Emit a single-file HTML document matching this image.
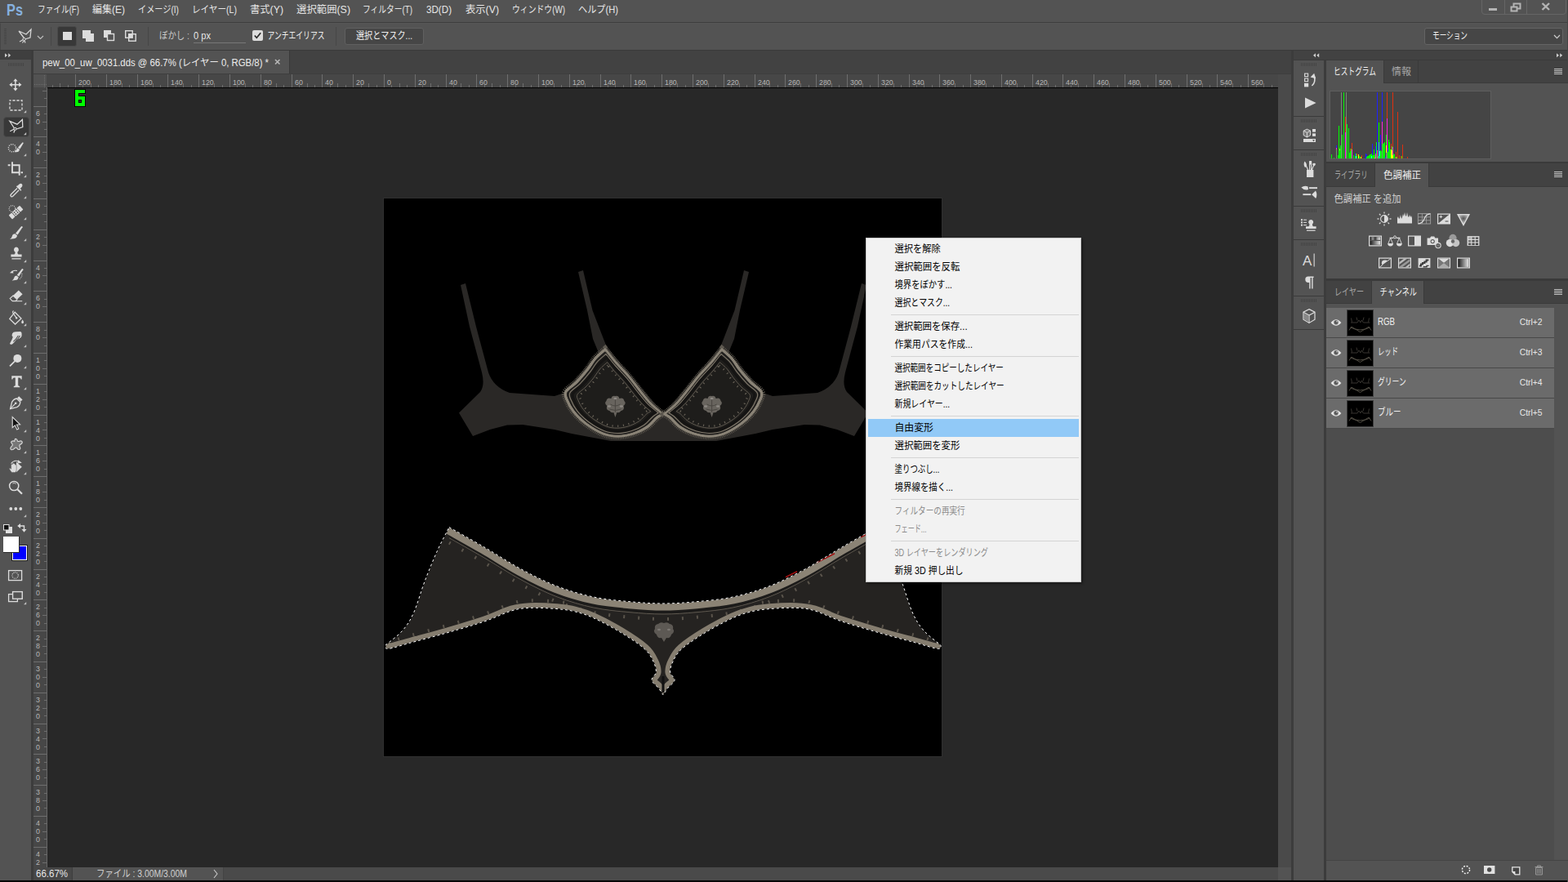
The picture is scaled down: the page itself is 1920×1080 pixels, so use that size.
<!DOCTYPE html>
<html><head><meta charset="utf-8"><title>Photoshop</title>
<style>
html,body{margin:0;padding:0;}
body{width:1920px;height:1080px;overflow:hidden;background:#535353;font-family:"Liberation Sans", "Noto Sans CJK JP", sans-serif;position:relative;}
svg{position:absolute;overflow:visible;}
svg text{font-family:"Liberation Sans", "Noto Sans CJK JP", sans-serif;}
</style></head><body>
<div style="position:absolute;left:0px;top:0px;width:1920px;height:27px;background:#535353;"></div><div style="position:absolute;left:0px;top:27px;width:1920px;height:1px;background:#3d3d3d;"></div><div style="position:absolute;left:0px;top:28px;width:1920px;height:33px;background:#535353;box-sizing:border-box;border-top:1px solid #565656;border-left:1px solid #474747;"></div><div style="position:absolute;left:0px;top:61px;width:1920px;height:1px;background:#3a3a3a;"></div><div style="position:absolute;left:0px;top:62px;width:38px;height:11px;background:#3f3f3f;"></div><div style="position:absolute;left:0px;top:73px;width:38px;height:1005px;background:#535353;"></div><div style="position:absolute;left:38px;top:62px;width:3px;height:1016px;background:#3c3c3c;"></div><div style="position:absolute;left:41px;top:62px;width:1540px;height:28px;background:#424242;"></div><div style="position:absolute;left:41px;top:62px;width:313px;height:28px;background:#535353;"></div><div style="position:absolute;left:354px;top:62px;width:1px;height:28px;background:#3a3a3a;"></div><div style="position:absolute;left:41px;top:90px;width:1540px;height:1px;background:#3e3e3e;"></div><div style="position:absolute;left:41px;top:91px;width:1524px;height:16px;background:#474747;"></div><div style="position:absolute;left:41px;top:107px;width:16px;height:955px;background:#474747;"></div><div style="position:absolute;left:41px;top:91px;width:16px;height:16px;background:#525252;"></div><div style="position:absolute;left:57px;top:107px;width:1px;height:955px;background:#686868;"></div><div style="position:absolute;left:58px;top:108px;width:1507px;height:954px;background:#282828;"></div><div style="position:absolute;left:58px;top:107px;width:1507px;height:1px;background:#000;"></div><div style="position:absolute;left:1565px;top:91px;width:16px;height:971px;background:#4a4a4a;"></div><div style="position:absolute;left:41px;top:1062px;width:1524px;height:16px;background:#4a4a4a;"></div><div style="position:absolute;left:1565px;top:1062px;width:16px;height:16px;background:#535353;"></div><div style="position:absolute;left:41px;top:1062px;width:47px;height:16px;background:#474747;"></div><div style="position:absolute;left:88px;top:1062px;width:1px;height:16px;background:#3e3e3e;"></div><div style="position:absolute;left:89px;top:1062px;width:184px;height:16px;background:#535353;"></div><div style="position:absolute;left:273px;top:1062px;width:1px;height:16px;background:#444;"></div><div style="position:absolute;left:1581px;top:62px;width:3px;height:1016px;background:#3c3c3c;"></div><div style="position:absolute;left:1584px;top:62px;width:336px;height:11px;background:#424242;"></div><div style="position:absolute;left:1584px;top:73px;width:336px;height:1px;background:#3a3a3a;"></div><div style="position:absolute;left:1584px;top:74px;width:37px;height:1004px;background:#535353;"></div><div style="position:absolute;left:1621px;top:74px;width:3px;height:1004px;background:#3c3c3c;"></div><div style="position:absolute;left:0px;top:1078px;width:1920px;height:2px;background:#060606;"></div><div style="position:absolute;left:1919px;top:0px;width:1px;height:1080px;background:#444;"></div><div style="position:absolute;left:1814px;top:-1px;width:102px;height:17px;border:1px solid #666;border-radius:0 0 4px 4px;box-sizing:content-box"></div><div style="position:absolute;left:1842px;top:0px;width:1px;height:17px;background:#666;"></div><div style="position:absolute;left:1869px;top:0px;width:1px;height:17px;background:#666;"></div><div style="position:absolute;left:1823px;top:10px;width:10px;height:3px;background:#b4b4b4;"></div><svg style="left:1849px;top:3px" width="14" height="12"><rect x="4.5" y="1.5" width="8" height="6" fill="none" stroke="#b4b4b4" stroke-width="2"/><rect x="1.5" y="5.5" width="7" height="5" fill="#535353" stroke="#b4b4b4" stroke-width="2"/></svg><svg style="left:1887px;top:3px" width="12" height="10"><path d="M1.5 1 L10 9 M10 1 L1.5 9" stroke="#b4b4b4" stroke-width="2.4"/></svg><div style="position:absolute;left:5px;top:35px;width:3px;height:20px;background:repeating-linear-gradient(#454545 0 1px,transparent 1px 2px)"></div><svg style="left:22px;top:35px" width="18" height="19"><path d="M1 3 L10 7 L16 1 L15 11 L8.5 13 M8.5 13 L1 3" fill="none" stroke="#d6d6d6" stroke-width="1.3" stroke-linejoin="miter"/><path d="M8.8 12.2 L2 16 M7 12.5 L9 17.5 M8.5 13 l-3 4.5" fill="none" stroke="#d6d6d6" stroke-width="1.2"/><circle cx="7.6" cy="13" r="1.6" fill="#535353" stroke="#d6d6d6" stroke-width="1"/></svg><svg style="left:45px;top:43px" width="10" height="6"><path d="M1 1 L4.5 4.5 L8 1" fill="none" stroke="#c0c0c0" stroke-width="1.1"/></svg><div style="position:absolute;left:62px;top:33px;width:1px;height:23px;background:#474747;"></div><div style="position:absolute;left:70px;top:32px;width:24px;height:25px;background:#383838;border:1px solid #4a4a4a;border-radius:3px;box-sizing:border-box"></div><div style="position:absolute;left:77px;top:39px;width:11px;height:10px;background:#dcdcdc;"></div><svg style="left:101px;top:36px" width="15" height="16"><rect x="0" y="1" width="10" height="10" fill="#dcdcdc"/><rect x="4" y="5" width="10" height="10" fill="#dcdcdc"/></svg><svg style="left:127px;top:36px" width="15" height="16"><rect x="0" y="1" width="9" height="9" fill="#dcdcdc"/><rect x="4.5" y="5.5" width="8" height="8" fill="#535353" stroke="#dcdcdc" stroke-width="1.4"/></svg><svg style="left:152px;top:36px" width="16" height="16"><rect x="1.7" y="1.7" width="8.5" height="8.5" fill="none" stroke="#dcdcdc" stroke-width="1.4"/><rect x="5.7" y="5.7" width="8.5" height="8.5" fill="none" stroke="#dcdcdc" stroke-width="1.4"/><rect x="5.7" y="5.7" width="4.5" height="4.5" fill="#dcdcdc"/></svg><div style="position:absolute;left:181px;top:33px;width:1px;height:23px;background:#474747;"></div><div style="position:absolute;left:237px;top:52px;width:64px;height:1px;background:#777;"></div><div style="position:absolute;left:309px;top:37px;width:13px;height:13px;background:#dcdcdc;border-radius:2px"></div><svg style="left:309px;top:37px" width="13" height="13"><path d="M2.8 6.5 L5.3 9.3 L10.2 3.2" fill="none" stroke="#2a2a2a" stroke-width="1.7"/></svg><div style="position:absolute;left:411px;top:33px;width:1px;height:23px;background:#474747;"></div><div style="position:absolute;left:422px;top:34px;width:97px;height:21px;background:#464646;border:1px solid #606060;border-radius:3px;box-sizing:border-box"></div><div style="position:absolute;left:1744px;top:34px;width:170px;height:21px;background:#464646;border:1px solid #646464;border-radius:3px;box-sizing:border-box"></div><svg style="left:1902px;top:42px" width="10" height="7"><path d="M1 1 L4.5 4.7 L8 1" fill="none" stroke="#d0d0d0" stroke-width="1.1"/></svg><svg style="left:5px;top:64px" width="10" height="8"><path d="M1 1.2 L4 3.7 L1 6.2Z M5.2 1.2 L8.2 3.7 L5.2 6.2Z" fill="#cfcfcf"/></svg><div style="position:absolute;left:10px;top:77px;width:19px;height:4px;background:repeating-linear-gradient(90deg,#454545 0 1px,transparent 1px 2px)"></div><svg style="left:336px;top:72px" width="8" height="8"><path d="M1 1 L6.5 6.5 M6.5 1 L1 6.5" stroke="#b8b8b8" stroke-width="1.6"/></svg><svg width="1920" height="1080" style="left:0;top:0"><rect x="64" y="104" width="1" height="3" fill="#6e6e6e"/><rect x="73" y="102" width="1" height="5" fill="#6e6e6e"/><rect x="83" y="104" width="1" height="3" fill="#6e6e6e"/><rect x="92" y="91" width="1" height="16" fill="#6e6e6e"/><rect x="101" y="104" width="1" height="3" fill="#6e6e6e"/><rect x="111" y="102" width="1" height="5" fill="#6e6e6e"/><rect x="120" y="104" width="1" height="3" fill="#6e6e6e"/><rect x="130" y="91" width="1" height="16" fill="#6e6e6e"/><rect x="139" y="104" width="1" height="3" fill="#6e6e6e"/><rect x="149" y="102" width="1" height="5" fill="#6e6e6e"/><rect x="158" y="104" width="1" height="3" fill="#6e6e6e"/><rect x="168" y="91" width="1" height="16" fill="#6e6e6e"/><rect x="177" y="104" width="1" height="3" fill="#6e6e6e"/><rect x="187" y="102" width="1" height="5" fill="#6e6e6e"/><rect x="196" y="104" width="1" height="3" fill="#6e6e6e"/><rect x="205" y="91" width="1" height="16" fill="#6e6e6e"/><rect x="215" y="104" width="1" height="3" fill="#6e6e6e"/><rect x="224" y="102" width="1" height="5" fill="#6e6e6e"/><rect x="234" y="104" width="1" height="3" fill="#6e6e6e"/><rect x="243" y="91" width="1" height="16" fill="#6e6e6e"/><rect x="253" y="104" width="1" height="3" fill="#6e6e6e"/><rect x="262" y="102" width="1" height="5" fill="#6e6e6e"/><rect x="272" y="104" width="1" height="3" fill="#6e6e6e"/><rect x="281" y="91" width="1" height="16" fill="#6e6e6e"/><rect x="290" y="104" width="1" height="3" fill="#6e6e6e"/><rect x="300" y="102" width="1" height="5" fill="#6e6e6e"/><rect x="309" y="104" width="1" height="3" fill="#6e6e6e"/><rect x="319" y="91" width="1" height="16" fill="#6e6e6e"/><rect x="328" y="104" width="1" height="3" fill="#6e6e6e"/><rect x="338" y="102" width="1" height="5" fill="#6e6e6e"/><rect x="347" y="104" width="1" height="3" fill="#6e6e6e"/><rect x="357" y="91" width="1" height="16" fill="#6e6e6e"/><rect x="366" y="104" width="1" height="3" fill="#6e6e6e"/><rect x="376" y="102" width="1" height="5" fill="#6e6e6e"/><rect x="385" y="104" width="1" height="3" fill="#6e6e6e"/><rect x="394" y="91" width="1" height="16" fill="#6e6e6e"/><rect x="404" y="104" width="1" height="3" fill="#6e6e6e"/><rect x="413" y="102" width="1" height="5" fill="#6e6e6e"/><rect x="423" y="104" width="1" height="3" fill="#6e6e6e"/><rect x="432" y="91" width="1" height="16" fill="#6e6e6e"/><rect x="442" y="104" width="1" height="3" fill="#6e6e6e"/><rect x="451" y="102" width="1" height="5" fill="#6e6e6e"/><rect x="461" y="104" width="1" height="3" fill="#6e6e6e"/><rect x="470" y="91" width="1" height="16" fill="#6e6e6e"/><rect x="479" y="104" width="1" height="3" fill="#6e6e6e"/><rect x="489" y="102" width="1" height="5" fill="#6e6e6e"/><rect x="498" y="104" width="1" height="3" fill="#6e6e6e"/><rect x="508" y="91" width="1" height="16" fill="#6e6e6e"/><rect x="517" y="104" width="1" height="3" fill="#6e6e6e"/><rect x="527" y="102" width="1" height="5" fill="#6e6e6e"/><rect x="536" y="104" width="1" height="3" fill="#6e6e6e"/><rect x="546" y="91" width="1" height="16" fill="#6e6e6e"/><rect x="555" y="104" width="1" height="3" fill="#6e6e6e"/><rect x="564" y="102" width="1" height="5" fill="#6e6e6e"/><rect x="574" y="104" width="1" height="3" fill="#6e6e6e"/><rect x="583" y="91" width="1" height="16" fill="#6e6e6e"/><rect x="593" y="104" width="1" height="3" fill="#6e6e6e"/><rect x="602" y="102" width="1" height="5" fill="#6e6e6e"/><rect x="612" y="104" width="1" height="3" fill="#6e6e6e"/><rect x="621" y="91" width="1" height="16" fill="#6e6e6e"/><rect x="631" y="104" width="1" height="3" fill="#6e6e6e"/><rect x="640" y="102" width="1" height="5" fill="#6e6e6e"/><rect x="650" y="104" width="1" height="3" fill="#6e6e6e"/><rect x="659" y="91" width="1" height="16" fill="#6e6e6e"/><rect x="668" y="104" width="1" height="3" fill="#6e6e6e"/><rect x="678" y="102" width="1" height="5" fill="#6e6e6e"/><rect x="687" y="104" width="1" height="3" fill="#6e6e6e"/><rect x="697" y="91" width="1" height="16" fill="#6e6e6e"/><rect x="706" y="104" width="1" height="3" fill="#6e6e6e"/><rect x="716" y="102" width="1" height="5" fill="#6e6e6e"/><rect x="725" y="104" width="1" height="3" fill="#6e6e6e"/><rect x="735" y="91" width="1" height="16" fill="#6e6e6e"/><rect x="744" y="104" width="1" height="3" fill="#6e6e6e"/><rect x="753" y="102" width="1" height="5" fill="#6e6e6e"/><rect x="763" y="104" width="1" height="3" fill="#6e6e6e"/><rect x="772" y="91" width="1" height="16" fill="#6e6e6e"/><rect x="782" y="104" width="1" height="3" fill="#6e6e6e"/><rect x="791" y="102" width="1" height="5" fill="#6e6e6e"/><rect x="801" y="104" width="1" height="3" fill="#6e6e6e"/><rect x="810" y="91" width="1" height="16" fill="#6e6e6e"/><rect x="820" y="104" width="1" height="3" fill="#6e6e6e"/><rect x="829" y="102" width="1" height="5" fill="#6e6e6e"/><rect x="839" y="104" width="1" height="3" fill="#6e6e6e"/><rect x="848" y="91" width="1" height="16" fill="#6e6e6e"/><rect x="857" y="104" width="1" height="3" fill="#6e6e6e"/><rect x="867" y="102" width="1" height="5" fill="#6e6e6e"/><rect x="876" y="104" width="1" height="3" fill="#6e6e6e"/><rect x="886" y="91" width="1" height="16" fill="#6e6e6e"/><rect x="895" y="104" width="1" height="3" fill="#6e6e6e"/><rect x="905" y="102" width="1" height="5" fill="#6e6e6e"/><rect x="914" y="104" width="1" height="3" fill="#6e6e6e"/><rect x="924" y="91" width="1" height="16" fill="#6e6e6e"/><rect x="933" y="104" width="1" height="3" fill="#6e6e6e"/><rect x="942" y="102" width="1" height="5" fill="#6e6e6e"/><rect x="952" y="104" width="1" height="3" fill="#6e6e6e"/><rect x="961" y="91" width="1" height="16" fill="#6e6e6e"/><rect x="971" y="104" width="1" height="3" fill="#6e6e6e"/><rect x="980" y="102" width="1" height="5" fill="#6e6e6e"/><rect x="990" y="104" width="1" height="3" fill="#6e6e6e"/><rect x="999" y="91" width="1" height="16" fill="#6e6e6e"/><rect x="1009" y="104" width="1" height="3" fill="#6e6e6e"/><rect x="1018" y="102" width="1" height="5" fill="#6e6e6e"/><rect x="1027" y="104" width="1" height="3" fill="#6e6e6e"/><rect x="1037" y="91" width="1" height="16" fill="#6e6e6e"/><rect x="1046" y="104" width="1" height="3" fill="#6e6e6e"/><rect x="1056" y="102" width="1" height="5" fill="#6e6e6e"/><rect x="1065" y="104" width="1" height="3" fill="#6e6e6e"/><rect x="1075" y="91" width="1" height="16" fill="#6e6e6e"/><rect x="1084" y="104" width="1" height="3" fill="#6e6e6e"/><rect x="1094" y="102" width="1" height="5" fill="#6e6e6e"/><rect x="1103" y="104" width="1" height="3" fill="#6e6e6e"/><rect x="1113" y="91" width="1" height="16" fill="#6e6e6e"/><rect x="1122" y="104" width="1" height="3" fill="#6e6e6e"/><rect x="1131" y="102" width="1" height="5" fill="#6e6e6e"/><rect x="1141" y="104" width="1" height="3" fill="#6e6e6e"/><rect x="1150" y="91" width="1" height="16" fill="#6e6e6e"/><rect x="1160" y="104" width="1" height="3" fill="#6e6e6e"/><rect x="1169" y="102" width="1" height="5" fill="#6e6e6e"/><rect x="1179" y="104" width="1" height="3" fill="#6e6e6e"/><rect x="1188" y="91" width="1" height="16" fill="#6e6e6e"/><rect x="1198" y="104" width="1" height="3" fill="#6e6e6e"/><rect x="1207" y="102" width="1" height="5" fill="#6e6e6e"/><rect x="1216" y="104" width="1" height="3" fill="#6e6e6e"/><rect x="1226" y="91" width="1" height="16" fill="#6e6e6e"/><rect x="1235" y="104" width="1" height="3" fill="#6e6e6e"/><rect x="1245" y="102" width="1" height="5" fill="#6e6e6e"/><rect x="1254" y="104" width="1" height="3" fill="#6e6e6e"/><rect x="1264" y="91" width="1" height="16" fill="#6e6e6e"/><rect x="1273" y="104" width="1" height="3" fill="#6e6e6e"/><rect x="1283" y="102" width="1" height="5" fill="#6e6e6e"/><rect x="1292" y="104" width="1" height="3" fill="#6e6e6e"/><rect x="1301" y="91" width="1" height="16" fill="#6e6e6e"/><rect x="1311" y="104" width="1" height="3" fill="#6e6e6e"/><rect x="1320" y="102" width="1" height="5" fill="#6e6e6e"/><rect x="1330" y="104" width="1" height="3" fill="#6e6e6e"/><rect x="1339" y="91" width="1" height="16" fill="#6e6e6e"/><rect x="1349" y="104" width="1" height="3" fill="#6e6e6e"/><rect x="1358" y="102" width="1" height="5" fill="#6e6e6e"/><rect x="1368" y="104" width="1" height="3" fill="#6e6e6e"/><rect x="1377" y="91" width="1" height="16" fill="#6e6e6e"/><rect x="1387" y="104" width="1" height="3" fill="#6e6e6e"/><rect x="1396" y="102" width="1" height="5" fill="#6e6e6e"/><rect x="1405" y="104" width="1" height="3" fill="#6e6e6e"/><rect x="1415" y="91" width="1" height="16" fill="#6e6e6e"/><rect x="1424" y="104" width="1" height="3" fill="#6e6e6e"/><rect x="1434" y="102" width="1" height="5" fill="#6e6e6e"/><rect x="1443" y="104" width="1" height="3" fill="#6e6e6e"/><rect x="1453" y="91" width="1" height="16" fill="#6e6e6e"/><rect x="1462" y="104" width="1" height="3" fill="#6e6e6e"/><rect x="1472" y="102" width="1" height="5" fill="#6e6e6e"/><rect x="1481" y="104" width="1" height="3" fill="#6e6e6e"/><rect x="1490" y="91" width="1" height="16" fill="#6e6e6e"/><rect x="1500" y="104" width="1" height="3" fill="#6e6e6e"/><rect x="1509" y="102" width="1" height="5" fill="#6e6e6e"/><rect x="1519" y="104" width="1" height="3" fill="#6e6e6e"/><rect x="1528" y="91" width="1" height="16" fill="#6e6e6e"/><rect x="1538" y="104" width="1" height="3" fill="#6e6e6e"/><rect x="1547" y="102" width="1" height="5" fill="#6e6e6e"/><rect x="1557" y="104" width="1" height="3" fill="#6e6e6e"/><rect x="52" y="111" width="5" height="1" fill="#6e6e6e"/><rect x="54" y="120" width="3" height="1" fill="#6e6e6e"/><rect x="41" y="130" width="16" height="1" fill="#6e6e6e"/><rect x="54" y="139" width="3" height="1" fill="#6e6e6e"/><rect x="52" y="149" width="5" height="1" fill="#6e6e6e"/><rect x="54" y="158" width="3" height="1" fill="#6e6e6e"/><rect x="41" y="167" width="16" height="1" fill="#6e6e6e"/><rect x="54" y="177" width="3" height="1" fill="#6e6e6e"/><rect x="52" y="186" width="5" height="1" fill="#6e6e6e"/><rect x="54" y="196" width="3" height="1" fill="#6e6e6e"/><rect x="41" y="205" width="16" height="1" fill="#6e6e6e"/><rect x="54" y="215" width="3" height="1" fill="#6e6e6e"/><rect x="52" y="224" width="5" height="1" fill="#6e6e6e"/><rect x="54" y="234" width="3" height="1" fill="#6e6e6e"/><rect x="41" y="243" width="16" height="1" fill="#6e6e6e"/><rect x="54" y="252" width="3" height="1" fill="#6e6e6e"/><rect x="52" y="262" width="5" height="1" fill="#6e6e6e"/><rect x="54" y="271" width="3" height="1" fill="#6e6e6e"/><rect x="41" y="281" width="16" height="1" fill="#6e6e6e"/><rect x="54" y="290" width="3" height="1" fill="#6e6e6e"/><rect x="52" y="300" width="5" height="1" fill="#6e6e6e"/><rect x="54" y="309" width="3" height="1" fill="#6e6e6e"/><rect x="41" y="319" width="16" height="1" fill="#6e6e6e"/><rect x="54" y="328" width="3" height="1" fill="#6e6e6e"/><rect x="52" y="337" width="5" height="1" fill="#6e6e6e"/><rect x="54" y="347" width="3" height="1" fill="#6e6e6e"/><rect x="41" y="356" width="16" height="1" fill="#6e6e6e"/><rect x="54" y="366" width="3" height="1" fill="#6e6e6e"/><rect x="52" y="375" width="5" height="1" fill="#6e6e6e"/><rect x="54" y="385" width="3" height="1" fill="#6e6e6e"/><rect x="41" y="394" width="16" height="1" fill="#6e6e6e"/><rect x="54" y="404" width="3" height="1" fill="#6e6e6e"/><rect x="52" y="413" width="5" height="1" fill="#6e6e6e"/><rect x="54" y="423" width="3" height="1" fill="#6e6e6e"/><rect x="41" y="432" width="16" height="1" fill="#6e6e6e"/><rect x="54" y="441" width="3" height="1" fill="#6e6e6e"/><rect x="52" y="451" width="5" height="1" fill="#6e6e6e"/><rect x="54" y="460" width="3" height="1" fill="#6e6e6e"/><rect x="41" y="470" width="16" height="1" fill="#6e6e6e"/><rect x="54" y="479" width="3" height="1" fill="#6e6e6e"/><rect x="52" y="489" width="5" height="1" fill="#6e6e6e"/><rect x="54" y="498" width="3" height="1" fill="#6e6e6e"/><rect x="41" y="508" width="16" height="1" fill="#6e6e6e"/><rect x="54" y="517" width="3" height="1" fill="#6e6e6e"/><rect x="52" y="526" width="5" height="1" fill="#6e6e6e"/><rect x="54" y="536" width="3" height="1" fill="#6e6e6e"/><rect x="41" y="545" width="16" height="1" fill="#6e6e6e"/><rect x="54" y="555" width="3" height="1" fill="#6e6e6e"/><rect x="52" y="564" width="5" height="1" fill="#6e6e6e"/><rect x="54" y="574" width="3" height="1" fill="#6e6e6e"/><rect x="41" y="583" width="16" height="1" fill="#6e6e6e"/><rect x="54" y="593" width="3" height="1" fill="#6e6e6e"/><rect x="52" y="602" width="5" height="1" fill="#6e6e6e"/><rect x="54" y="612" width="3" height="1" fill="#6e6e6e"/><rect x="41" y="621" width="16" height="1" fill="#6e6e6e"/><rect x="54" y="630" width="3" height="1" fill="#6e6e6e"/><rect x="52" y="640" width="5" height="1" fill="#6e6e6e"/><rect x="54" y="649" width="3" height="1" fill="#6e6e6e"/><rect x="41" y="659" width="16" height="1" fill="#6e6e6e"/><rect x="54" y="668" width="3" height="1" fill="#6e6e6e"/><rect x="52" y="678" width="5" height="1" fill="#6e6e6e"/><rect x="54" y="687" width="3" height="1" fill="#6e6e6e"/><rect x="41" y="697" width="16" height="1" fill="#6e6e6e"/><rect x="54" y="706" width="3" height="1" fill="#6e6e6e"/><rect x="52" y="715" width="5" height="1" fill="#6e6e6e"/><rect x="54" y="725" width="3" height="1" fill="#6e6e6e"/><rect x="41" y="734" width="16" height="1" fill="#6e6e6e"/><rect x="54" y="744" width="3" height="1" fill="#6e6e6e"/><rect x="52" y="753" width="5" height="1" fill="#6e6e6e"/><rect x="54" y="763" width="3" height="1" fill="#6e6e6e"/><rect x="41" y="772" width="16" height="1" fill="#6e6e6e"/><rect x="54" y="782" width="3" height="1" fill="#6e6e6e"/><rect x="52" y="791" width="5" height="1" fill="#6e6e6e"/><rect x="54" y="800" width="3" height="1" fill="#6e6e6e"/><rect x="41" y="810" width="16" height="1" fill="#6e6e6e"/><rect x="54" y="819" width="3" height="1" fill="#6e6e6e"/><rect x="52" y="829" width="5" height="1" fill="#6e6e6e"/><rect x="54" y="838" width="3" height="1" fill="#6e6e6e"/><rect x="41" y="848" width="16" height="1" fill="#6e6e6e"/><rect x="54" y="857" width="3" height="1" fill="#6e6e6e"/><rect x="52" y="867" width="5" height="1" fill="#6e6e6e"/><rect x="54" y="876" width="3" height="1" fill="#6e6e6e"/><rect x="41" y="886" width="16" height="1" fill="#6e6e6e"/><rect x="54" y="895" width="3" height="1" fill="#6e6e6e"/><rect x="52" y="904" width="5" height="1" fill="#6e6e6e"/><rect x="54" y="914" width="3" height="1" fill="#6e6e6e"/><rect x="41" y="923" width="16" height="1" fill="#6e6e6e"/><rect x="54" y="933" width="3" height="1" fill="#6e6e6e"/><rect x="52" y="942" width="5" height="1" fill="#6e6e6e"/><rect x="54" y="952" width="3" height="1" fill="#6e6e6e"/><rect x="41" y="961" width="16" height="1" fill="#6e6e6e"/><rect x="54" y="971" width="3" height="1" fill="#6e6e6e"/><rect x="52" y="980" width="5" height="1" fill="#6e6e6e"/><rect x="54" y="989" width="3" height="1" fill="#6e6e6e"/><rect x="41" y="999" width="16" height="1" fill="#6e6e6e"/><rect x="54" y="1008" width="3" height="1" fill="#6e6e6e"/><rect x="52" y="1018" width="5" height="1" fill="#6e6e6e"/><rect x="54" y="1027" width="3" height="1" fill="#6e6e6e"/><rect x="41" y="1037" width="16" height="1" fill="#6e6e6e"/><rect x="54" y="1046" width="3" height="1" fill="#6e6e6e"/><rect x="52" y="1056" width="5" height="1" fill="#6e6e6e"/></svg><svg style="left:41px;top:91px" width="16" height="16"><path d="M13.5 1 V16 M1 12.5 H16" stroke="#6c6c6c" stroke-width="1" stroke-dasharray="1 1" fill="none"/></svg><svg style="left:260px;top:1064px" width="9" height="12"><path d="M2 1 L6 6 L2 11" fill="none" stroke="#c8c8c8" stroke-width="1.1"/></svg><svg width="1920" height="1080" style="left:0;top:0"><rect x="470" y="243" width="683" height="683" fill="#000"/><rect x="469.5" y="242.5" width="684" height="684" fill="none" stroke="#2f2f2f" stroke-width="1"/><g><path d="M564 349 L570 347 L583 400 L598 456 Q604 474 624 481 L679 485 L691 481 L733 432 L726 415 L719 380 L708 333 L714 331 L725.5 380 L739 415 L743 425 L813 508 L813 540 L748 540 L700 531 L679 526 L640 520 L621 520.5 L600 526 L579 534 L562 505.6 L588 480 Q594 472 590 456 L575 400 Z" fill="#2a2826"/><path d="M741.0 428.0 C739.0 429.8 732.6 434.9 729.0 439.0 C725.4 443.1 723.3 447.7 719.5 452.5 C715.7 457.3 710.4 463.5 706.0 468.0 C701.6 472.5 695.0 476.0 693.0 479.5 C691.0 483.0 692.4 484.9 694.0 489.0 C695.6 493.1 698.5 499.0 702.5 504.0 C706.5 509.0 711.9 514.5 718.0 519.0 C724.1 523.5 732.5 528.5 739.0 531.0 C745.5 533.5 751.0 534.0 757.0 534.0 C763.0 534.0 769.2 532.8 775.0 531.0 C780.8 529.2 787.2 526.2 792.0 523.0 C796.8 519.8 800.8 514.2 804.0 511.5 C807.2 508.8 809.8 507.8 811.0 507.0 L811.0 507.0 C808.8 505.2 802.2 500.2 798.0 496.0 C793.8 491.8 790.8 487.8 786.0 482.0 C781.2 476.2 775.0 467.5 769.5 461.0 C764.0 454.5 757.8 448.5 753.0 443.0 C748.2 437.5 743.0 430.5 741.0 428.0 Z" fill="#1e1d1b" stroke="#5d584f" stroke-width="8.5" stroke-dasharray="0.9 1.1"/><path d="M741.0 428.0 C739.0 429.8 732.6 434.9 729.0 439.0 C725.4 443.1 723.3 447.7 719.5 452.5 C715.7 457.3 710.4 463.5 706.0 468.0 C701.6 472.5 695.0 476.0 693.0 479.5 C691.0 483.0 692.4 484.9 694.0 489.0 C695.6 493.1 698.5 499.0 702.5 504.0 C706.5 509.0 711.9 514.5 718.0 519.0 C724.1 523.5 732.5 528.5 739.0 531.0 C745.5 533.5 751.0 534.0 757.0 534.0 C763.0 534.0 769.2 532.8 775.0 531.0 C780.8 529.2 787.2 526.2 792.0 523.0 C796.8 519.8 800.8 514.2 804.0 511.5 C807.2 508.8 809.8 507.8 811.0 507.0 L811.0 507.0 C808.8 505.2 802.2 500.2 798.0 496.0 C793.8 491.8 790.8 487.8 786.0 482.0 C781.2 476.2 775.0 467.5 769.5 461.0 C764.0 454.5 757.8 448.5 753.0 443.0 C748.2 437.5 743.0 430.5 741.0 428.0 Z" fill="#1e1d1b" stroke="#8a8376" stroke-width="3.4" stroke-linejoin="round"/><path d="M741.0 428.0 C739.0 429.8 732.6 434.9 729.0 439.0 C725.4 443.1 723.3 447.7 719.5 452.5 C715.7 457.3 710.4 463.5 706.0 468.0 C701.6 472.5 695.0 476.0 693.0 479.5 C691.0 483.0 692.4 484.9 694.0 489.0 C695.6 493.1 698.5 499.0 702.5 504.0 C706.5 509.0 711.9 514.5 718.0 519.0 C724.1 523.5 732.5 528.5 739.0 531.0 C745.5 533.5 751.0 534.0 757.0 534.0 C763.0 534.0 769.2 532.8 775.0 531.0 C780.8 529.2 787.2 526.2 792.0 523.0 C796.8 519.8 800.8 514.2 804.0 511.5 C807.2 508.8 809.8 507.8 811.0 507.0 L811.0 507.0 C808.8 505.2 802.2 500.2 798.0 496.0 C793.8 491.8 790.8 487.8 786.0 482.0 C781.2 476.2 775.0 467.5 769.5 461.0 C764.0 454.5 757.8 448.5 753.0 443.0 C748.2 437.5 743.0 430.5 741.0 428.0 Z" fill="none" stroke="#24221f" stroke-width="1" transform="translate(33.84 22.19) scale(0.955)"/><path d="M741.0 428.0 C739.0 429.8 732.6 434.9 729.0 439.0 C725.4 443.1 723.3 447.7 719.5 452.5 C715.7 457.3 710.4 463.5 706.0 468.0 C701.6 472.5 695.0 476.0 693.0 479.5 C691.0 483.0 692.4 484.9 694.0 489.0 C695.6 493.1 698.5 499.0 702.5 504.0 C706.5 509.0 711.9 514.5 718.0 519.0 C724.1 523.5 732.5 528.5 739.0 531.0 C745.5 533.5 751.0 534.0 757.0 534.0 C763.0 534.0 769.2 532.8 775.0 531.0 C780.8 529.2 787.2 526.2 792.0 523.0 C796.8 519.8 800.8 514.2 804.0 511.5 C807.2 508.8 809.8 507.8 811.0 507.0 L811.0 507.0 C808.8 505.2 802.2 500.2 798.0 496.0 C793.8 491.8 790.8 487.8 786.0 482.0 C781.2 476.2 775.0 467.5 769.5 461.0 C764.0 454.5 757.8 448.5 753.0 443.0 C748.2 437.5 743.0 430.5 741.0 428.0 Z" fill="none" stroke="#81796c" stroke-width="1.3" transform="translate(63.92 41.90) scale(0.915)"/><path d="M741.0 428.0 C739.0 429.8 732.6 434.9 729.0 439.0 C725.4 443.1 723.3 447.7 719.5 452.5 C715.7 457.3 710.4 463.5 706.0 468.0 C701.6 472.5 695.0 476.0 693.0 479.5 C691.0 483.0 692.4 484.9 694.0 489.0 C695.6 493.1 698.5 499.0 702.5 504.0 C706.5 509.0 711.9 514.5 718.0 519.0 C724.1 523.5 732.5 528.5 739.0 531.0 C745.5 533.5 751.0 534.0 757.0 534.0 C763.0 534.0 769.2 532.8 775.0 531.0 C780.8 529.2 787.2 526.2 792.0 523.0 C796.8 519.8 800.8 514.2 804.0 511.5 C807.2 508.8 809.8 507.8 811.0 507.0 L811.0 507.0 C808.8 505.2 802.2 500.2 798.0 496.0 C793.8 491.8 790.8 487.8 786.0 482.0 C781.2 476.2 775.0 467.5 769.5 461.0 C764.0 454.5 757.8 448.5 753.0 443.0 C748.2 437.5 743.0 430.5 741.0 428.0 Z" fill="none" stroke="#151413" stroke-width="3.6" transform="translate(112.80 73.95) scale(0.85)"/><path d="M741.0 428.0 C739.0 429.8 732.6 434.9 729.0 439.0 C725.4 443.1 723.3 447.7 719.5 452.5 C715.7 457.3 710.4 463.5 706.0 468.0 C701.6 472.5 695.0 476.0 693.0 479.5 C691.0 483.0 692.4 484.9 694.0 489.0 C695.6 493.1 698.5 499.0 702.5 504.0 C706.5 509.0 711.9 514.5 718.0 519.0 C724.1 523.5 732.5 528.5 739.0 531.0 C745.5 533.5 751.0 534.0 757.0 534.0 C763.0 534.0 769.2 532.8 775.0 531.0 C780.8 529.2 787.2 526.2 792.0 523.0 C796.8 519.8 800.8 514.2 804.0 511.5 C807.2 508.8 809.8 507.8 811.0 507.0 L811.0 507.0 C808.8 505.2 802.2 500.2 798.0 496.0 C793.8 491.8 790.8 487.8 786.0 482.0 C781.2 476.2 775.0 467.5 769.5 461.0 C764.0 454.5 757.8 448.5 753.0 443.0 C748.2 437.5 743.0 430.5 741.0 428.0 Z" fill="none" stroke="#746d61" stroke-width="1" transform="translate(180.48 118.32) scale(0.76)"/><path d="M741.0 428.0 C739.0 429.8 732.6 434.9 729.0 439.0 C725.4 443.1 723.3 447.7 719.5 452.5 C715.7 457.3 710.4 463.5 706.0 468.0 C701.6 472.5 695.0 476.0 693.0 479.5 C691.0 483.0 692.4 484.9 694.0 489.0 C695.6 493.1 698.5 499.0 702.5 504.0 C706.5 509.0 711.9 514.5 718.0 519.0 C724.1 523.5 732.5 528.5 739.0 531.0 C745.5 533.5 751.0 534.0 757.0 534.0 C763.0 534.0 769.2 532.8 775.0 531.0 C780.8 529.2 787.2 526.2 792.0 523.0 C796.8 519.8 800.8 514.2 804.0 511.5 C807.2 508.8 809.8 507.8 811.0 507.0 L811.0 507.0 C808.8 505.2 802.2 500.2 798.0 496.0 C793.8 491.8 790.8 487.8 786.0 482.0 C781.2 476.2 775.0 467.5 769.5 461.0 C764.0 454.5 757.8 448.5 753.0 443.0 C748.2 437.5 743.0 430.5 741.0 428.0 Z" fill="none" stroke="#6a6459" stroke-width="3.4" stroke-dasharray="1.6 8" transform="translate(225.60 147.90) scale(0.7)"/><g transform="translate(753.4 498)"><path d="M0 -13 q4 -1 5 3 q5 -2 6 3 q3 3 -1 6 q2 5 -3 6 q-2 3 -5 2 l-2 6 l-2 -6 q-3 1 -5 -2 q-5 -1 -3 -6 q-4 -3 -1 -6 q1 -5 6 -3 q1 -4 5 -3z" fill="#68645e"/><path d="M0 -10 v17 M-6 -3 q6 4 12 0 M-7 3 q7 3 14 0" stroke="#4a4742" stroke-width="1" fill="none"/><ellipse cx="-7.5" cy="-0.5" rx="2.2" ry="1.3" fill="#8d8984"/><ellipse cx="7.5" cy="-0.5" rx="2.2" ry="1.3" fill="#8d8984"/><ellipse cx="0" cy="-10" rx="2" ry="1.2" fill="#8d8984"/></g></g><g transform="translate(1625,0) scale(-1,1)"><path d="M564 349 L570 347 L583 400 L598 456 Q604 474 624 481 L679 485 L691 481 L733 432 L726 415 L719 380 L708 333 L714 331 L725.5 380 L739 415 L743 425 L813 508 L813 540 L748 540 L700 531 L679 526 L640 520 L621 520.5 L600 526 L579 534 L562 505.6 L588 480 Q594 472 590 456 L575 400 Z" fill="#2a2826"/><path d="M741.0 428.0 C739.0 429.8 732.6 434.9 729.0 439.0 C725.4 443.1 723.3 447.7 719.5 452.5 C715.7 457.3 710.4 463.5 706.0 468.0 C701.6 472.5 695.0 476.0 693.0 479.5 C691.0 483.0 692.4 484.9 694.0 489.0 C695.6 493.1 698.5 499.0 702.5 504.0 C706.5 509.0 711.9 514.5 718.0 519.0 C724.1 523.5 732.5 528.5 739.0 531.0 C745.5 533.5 751.0 534.0 757.0 534.0 C763.0 534.0 769.2 532.8 775.0 531.0 C780.8 529.2 787.2 526.2 792.0 523.0 C796.8 519.8 800.8 514.2 804.0 511.5 C807.2 508.8 809.8 507.8 811.0 507.0 L811.0 507.0 C808.8 505.2 802.2 500.2 798.0 496.0 C793.8 491.8 790.8 487.8 786.0 482.0 C781.2 476.2 775.0 467.5 769.5 461.0 C764.0 454.5 757.8 448.5 753.0 443.0 C748.2 437.5 743.0 430.5 741.0 428.0 Z" fill="#1e1d1b" stroke="#5d584f" stroke-width="8.5" stroke-dasharray="0.9 1.1"/><path d="M741.0 428.0 C739.0 429.8 732.6 434.9 729.0 439.0 C725.4 443.1 723.3 447.7 719.5 452.5 C715.7 457.3 710.4 463.5 706.0 468.0 C701.6 472.5 695.0 476.0 693.0 479.5 C691.0 483.0 692.4 484.9 694.0 489.0 C695.6 493.1 698.5 499.0 702.5 504.0 C706.5 509.0 711.9 514.5 718.0 519.0 C724.1 523.5 732.5 528.5 739.0 531.0 C745.5 533.5 751.0 534.0 757.0 534.0 C763.0 534.0 769.2 532.8 775.0 531.0 C780.8 529.2 787.2 526.2 792.0 523.0 C796.8 519.8 800.8 514.2 804.0 511.5 C807.2 508.8 809.8 507.8 811.0 507.0 L811.0 507.0 C808.8 505.2 802.2 500.2 798.0 496.0 C793.8 491.8 790.8 487.8 786.0 482.0 C781.2 476.2 775.0 467.5 769.5 461.0 C764.0 454.5 757.8 448.5 753.0 443.0 C748.2 437.5 743.0 430.5 741.0 428.0 Z" fill="#1e1d1b" stroke="#8a8376" stroke-width="3.4" stroke-linejoin="round"/><path d="M741.0 428.0 C739.0 429.8 732.6 434.9 729.0 439.0 C725.4 443.1 723.3 447.7 719.5 452.5 C715.7 457.3 710.4 463.5 706.0 468.0 C701.6 472.5 695.0 476.0 693.0 479.5 C691.0 483.0 692.4 484.9 694.0 489.0 C695.6 493.1 698.5 499.0 702.5 504.0 C706.5 509.0 711.9 514.5 718.0 519.0 C724.1 523.5 732.5 528.5 739.0 531.0 C745.5 533.5 751.0 534.0 757.0 534.0 C763.0 534.0 769.2 532.8 775.0 531.0 C780.8 529.2 787.2 526.2 792.0 523.0 C796.8 519.8 800.8 514.2 804.0 511.5 C807.2 508.8 809.8 507.8 811.0 507.0 L811.0 507.0 C808.8 505.2 802.2 500.2 798.0 496.0 C793.8 491.8 790.8 487.8 786.0 482.0 C781.2 476.2 775.0 467.5 769.5 461.0 C764.0 454.5 757.8 448.5 753.0 443.0 C748.2 437.5 743.0 430.5 741.0 428.0 Z" fill="none" stroke="#24221f" stroke-width="1" transform="translate(33.84 22.19) scale(0.955)"/><path d="M741.0 428.0 C739.0 429.8 732.6 434.9 729.0 439.0 C725.4 443.1 723.3 447.7 719.5 452.5 C715.7 457.3 710.4 463.5 706.0 468.0 C701.6 472.5 695.0 476.0 693.0 479.5 C691.0 483.0 692.4 484.9 694.0 489.0 C695.6 493.1 698.5 499.0 702.5 504.0 C706.5 509.0 711.9 514.5 718.0 519.0 C724.1 523.5 732.5 528.5 739.0 531.0 C745.5 533.5 751.0 534.0 757.0 534.0 C763.0 534.0 769.2 532.8 775.0 531.0 C780.8 529.2 787.2 526.2 792.0 523.0 C796.8 519.8 800.8 514.2 804.0 511.5 C807.2 508.8 809.8 507.8 811.0 507.0 L811.0 507.0 C808.8 505.2 802.2 500.2 798.0 496.0 C793.8 491.8 790.8 487.8 786.0 482.0 C781.2 476.2 775.0 467.5 769.5 461.0 C764.0 454.5 757.8 448.5 753.0 443.0 C748.2 437.5 743.0 430.5 741.0 428.0 Z" fill="none" stroke="#81796c" stroke-width="1.3" transform="translate(63.92 41.90) scale(0.915)"/><path d="M741.0 428.0 C739.0 429.8 732.6 434.9 729.0 439.0 C725.4 443.1 723.3 447.7 719.5 452.5 C715.7 457.3 710.4 463.5 706.0 468.0 C701.6 472.5 695.0 476.0 693.0 479.5 C691.0 483.0 692.4 484.9 694.0 489.0 C695.6 493.1 698.5 499.0 702.5 504.0 C706.5 509.0 711.9 514.5 718.0 519.0 C724.1 523.5 732.5 528.5 739.0 531.0 C745.5 533.5 751.0 534.0 757.0 534.0 C763.0 534.0 769.2 532.8 775.0 531.0 C780.8 529.2 787.2 526.2 792.0 523.0 C796.8 519.8 800.8 514.2 804.0 511.5 C807.2 508.8 809.8 507.8 811.0 507.0 L811.0 507.0 C808.8 505.2 802.2 500.2 798.0 496.0 C793.8 491.8 790.8 487.8 786.0 482.0 C781.2 476.2 775.0 467.5 769.5 461.0 C764.0 454.5 757.8 448.5 753.0 443.0 C748.2 437.5 743.0 430.5 741.0 428.0 Z" fill="none" stroke="#151413" stroke-width="3.6" transform="translate(112.80 73.95) scale(0.85)"/><path d="M741.0 428.0 C739.0 429.8 732.6 434.9 729.0 439.0 C725.4 443.1 723.3 447.7 719.5 452.5 C715.7 457.3 710.4 463.5 706.0 468.0 C701.6 472.5 695.0 476.0 693.0 479.5 C691.0 483.0 692.4 484.9 694.0 489.0 C695.6 493.1 698.5 499.0 702.5 504.0 C706.5 509.0 711.9 514.5 718.0 519.0 C724.1 523.5 732.5 528.5 739.0 531.0 C745.5 533.5 751.0 534.0 757.0 534.0 C763.0 534.0 769.2 532.8 775.0 531.0 C780.8 529.2 787.2 526.2 792.0 523.0 C796.8 519.8 800.8 514.2 804.0 511.5 C807.2 508.8 809.8 507.8 811.0 507.0 L811.0 507.0 C808.8 505.2 802.2 500.2 798.0 496.0 C793.8 491.8 790.8 487.8 786.0 482.0 C781.2 476.2 775.0 467.5 769.5 461.0 C764.0 454.5 757.8 448.5 753.0 443.0 C748.2 437.5 743.0 430.5 741.0 428.0 Z" fill="none" stroke="#746d61" stroke-width="1" transform="translate(180.48 118.32) scale(0.76)"/><path d="M741.0 428.0 C739.0 429.8 732.6 434.9 729.0 439.0 C725.4 443.1 723.3 447.7 719.5 452.5 C715.7 457.3 710.4 463.5 706.0 468.0 C701.6 472.5 695.0 476.0 693.0 479.5 C691.0 483.0 692.4 484.9 694.0 489.0 C695.6 493.1 698.5 499.0 702.5 504.0 C706.5 509.0 711.9 514.5 718.0 519.0 C724.1 523.5 732.5 528.5 739.0 531.0 C745.5 533.5 751.0 534.0 757.0 534.0 C763.0 534.0 769.2 532.8 775.0 531.0 C780.8 529.2 787.2 526.2 792.0 523.0 C796.8 519.8 800.8 514.2 804.0 511.5 C807.2 508.8 809.8 507.8 811.0 507.0 L811.0 507.0 C808.8 505.2 802.2 500.2 798.0 496.0 C793.8 491.8 790.8 487.8 786.0 482.0 C781.2 476.2 775.0 467.5 769.5 461.0 C764.0 454.5 757.8 448.5 753.0 443.0 C748.2 437.5 743.0 430.5 741.0 428.0 Z" fill="none" stroke="#6a6459" stroke-width="3.4" stroke-dasharray="1.6 8" transform="translate(225.60 147.90) scale(0.7)"/><g transform="translate(753.4 498)"><path d="M0 -13 q4 -1 5 3 q5 -2 6 3 q3 3 -1 6 q2 5 -3 6 q-2 3 -5 2 l-2 6 l-2 -6 q-3 1 -5 -2 q-5 -1 -3 -6 q-4 -3 -1 -6 q1 -5 6 -3 q1 -4 5 -3z" fill="#68645e"/><path d="M0 -10 v17 M-6 -3 q6 4 12 0 M-7 3 q7 3 14 0" stroke="#4a4742" stroke-width="1" fill="none"/><ellipse cx="-7.5" cy="-0.5" rx="2.2" ry="1.3" fill="#8d8984"/><ellipse cx="7.5" cy="-0.5" rx="2.2" ry="1.3" fill="#8d8984"/><ellipse cx="0" cy="-10" rx="2" ry="1.2" fill="#8d8984"/></g></g><clipPath id="gclip"><path d="M550.0 645.6 C557.2 649.7 578.4 661.5 593.0 670.0 C607.6 678.5 623.0 688.7 637.8 696.7 C652.6 704.7 667.2 712.1 682.0 717.8 C696.8 723.5 711.9 727.9 726.7 731.0 C741.5 734.1 756.8 735.4 771.0 736.7 C785.2 738.0 798.3 739.0 812.0 739.0 C825.7 739.0 838.8 738.0 853.0 736.7 C867.2 735.4 882.5 734.1 897.3 731.0 C912.1 727.9 927.2 723.5 942.0 717.8 C956.8 712.1 971.4 704.7 986.2 696.7 C1001.0 688.7 1016.4 678.5 1031.0 670.0 C1045.6 661.5 1066.8 649.7 1074.0 645.6 L1074.0 645.6 C1076.4 650.4 1083.5 663.3 1088.5 674.4 C1093.5 685.5 1099.2 699.4 1104.0 712.0 C1108.8 724.6 1112.8 740.0 1117.3 750.0 C1121.8 760.0 1125.2 765.3 1131.0 772.0 C1136.8 778.7 1148.5 787.0 1152.0 790.0 L1152.0 790.0 C1151.4 790.7 1153.8 794.9 1148.5 794.4 C1143.2 793.9 1132.2 790.0 1120.0 786.7 C1107.8 783.4 1089.8 778.7 1075.0 774.4 C1060.2 770.1 1044.0 765.4 1031.0 761.0 C1018.0 756.6 1006.6 750.6 997.3 747.8 C988.0 745.0 984.2 744.8 975.0 744.4 C965.8 744.0 951.2 744.8 942.0 745.6 C932.8 746.4 927.1 747.1 919.6 749.0 C912.1 750.9 906.6 752.5 897.3 756.7 C888.0 760.9 874.4 768.1 864.0 774.4 C853.6 780.7 841.7 788.5 835.0 794.4 C828.3 800.3 826.4 805.2 824.0 810.0 C821.6 814.8 820.4 819.2 820.7 823.0 C821.0 826.8 826.6 829.7 826.0 833.0 C825.4 836.3 819.6 840.0 817.3 843.0 C815.0 846.0 812.9 849.7 812.0 851.0 L812.0 851.0 C811.1 849.7 809.0 846.0 806.7 843.0 C804.4 840.0 798.6 836.3 798.0 833.0 C797.4 829.7 803.0 826.8 803.3 823.0 C803.6 819.2 802.4 814.8 800.0 810.0 C797.6 805.2 795.7 800.3 789.0 794.4 C782.3 788.5 770.4 780.7 760.0 774.4 C749.6 768.1 736.0 760.9 726.7 756.7 C717.4 752.5 711.9 750.9 704.4 749.0 C696.9 747.1 691.2 746.4 682.0 745.6 C672.8 744.8 658.2 744.0 649.0 744.4 C639.8 744.8 636.0 745.0 626.7 747.8 C617.4 750.6 606.0 756.6 593.0 761.0 C580.0 765.4 563.8 770.1 549.0 774.4 C534.2 778.7 516.2 783.4 504.0 786.7 C491.8 790.0 480.8 793.9 475.5 794.4 C470.2 794.9 472.6 790.7 472.0 790.0 L472.0 790.0 C475.5 787.0 487.2 778.7 493.0 772.0 C498.8 765.3 502.2 760.0 506.7 750.0 C511.2 740.0 515.2 724.6 520.0 712.0 C524.8 699.4 530.5 685.5 535.5 674.4 C540.5 663.3 547.6 650.4 550.0 645.6 Z"/></clipPath><path d="M550.0 645.6 C557.2 649.7 578.4 661.5 593.0 670.0 C607.6 678.5 623.0 688.7 637.8 696.7 C652.6 704.7 667.2 712.1 682.0 717.8 C696.8 723.5 711.9 727.9 726.7 731.0 C741.5 734.1 756.8 735.4 771.0 736.7 C785.2 738.0 798.3 739.0 812.0 739.0 C825.7 739.0 838.8 738.0 853.0 736.7 C867.2 735.4 882.5 734.1 897.3 731.0 C912.1 727.9 927.2 723.5 942.0 717.8 C956.8 712.1 971.4 704.7 986.2 696.7 C1001.0 688.7 1016.4 678.5 1031.0 670.0 C1045.6 661.5 1066.8 649.7 1074.0 645.6 L1074.0 645.6 C1076.4 650.4 1083.5 663.3 1088.5 674.4 C1093.5 685.5 1099.2 699.4 1104.0 712.0 C1108.8 724.6 1112.8 740.0 1117.3 750.0 C1121.8 760.0 1125.2 765.3 1131.0 772.0 C1136.8 778.7 1148.5 787.0 1152.0 790.0 L1152.0 790.0 C1151.4 790.7 1153.8 794.9 1148.5 794.4 C1143.2 793.9 1132.2 790.0 1120.0 786.7 C1107.8 783.4 1089.8 778.7 1075.0 774.4 C1060.2 770.1 1044.0 765.4 1031.0 761.0 C1018.0 756.6 1006.6 750.6 997.3 747.8 C988.0 745.0 984.2 744.8 975.0 744.4 C965.8 744.0 951.2 744.8 942.0 745.6 C932.8 746.4 927.1 747.1 919.6 749.0 C912.1 750.9 906.6 752.5 897.3 756.7 C888.0 760.9 874.4 768.1 864.0 774.4 C853.6 780.7 841.7 788.5 835.0 794.4 C828.3 800.3 826.4 805.2 824.0 810.0 C821.6 814.8 820.4 819.2 820.7 823.0 C821.0 826.8 826.6 829.7 826.0 833.0 C825.4 836.3 819.6 840.0 817.3 843.0 C815.0 846.0 812.9 849.7 812.0 851.0 L812.0 851.0 C811.1 849.7 809.0 846.0 806.7 843.0 C804.4 840.0 798.6 836.3 798.0 833.0 C797.4 829.7 803.0 826.8 803.3 823.0 C803.6 819.2 802.4 814.8 800.0 810.0 C797.6 805.2 795.7 800.3 789.0 794.4 C782.3 788.5 770.4 780.7 760.0 774.4 C749.6 768.1 736.0 760.9 726.7 756.7 C717.4 752.5 711.9 750.9 704.4 749.0 C696.9 747.1 691.2 746.4 682.0 745.6 C672.8 744.8 658.2 744.0 649.0 744.4 C639.8 744.8 636.0 745.0 626.7 747.8 C617.4 750.6 606.0 756.6 593.0 761.0 C580.0 765.4 563.8 770.1 549.0 774.4 C534.2 778.7 516.2 783.4 504.0 786.7 C491.8 790.0 480.8 793.9 475.5 794.4 C470.2 794.9 472.6 790.7 472.0 790.0 L472.0 790.0 C475.5 787.0 487.2 778.7 493.0 772.0 C498.8 765.3 502.2 760.0 506.7 750.0 C511.2 740.0 515.2 724.6 520.0 712.0 C524.8 699.4 530.5 685.5 535.5 674.4 C540.5 663.3 547.6 650.4 550.0 645.6 Z" fill="#252321"/><g clip-path="url(#gclip)"><path d="M550.0 658.6 C557.2 662.7 578.4 674.5 593.0 683.0 C607.6 691.5 623.0 701.7 637.8 709.7 C652.6 717.7 667.2 725.1 682.0 730.8 C696.8 736.5 711.9 740.9 726.7 744.0 C741.5 747.1 756.8 748.4 771.0 749.7 C785.2 751.0 798.3 752.0 812.0 752.0 C825.7 752.0 838.8 751.0 853.0 749.7 C867.2 748.4 882.5 747.1 897.3 744.0 C912.1 740.9 927.2 736.5 942.0 730.8 C956.8 725.1 971.4 717.7 986.2 709.7 C1001.0 701.7 1016.4 691.5 1031.0 683.0 C1045.6 674.5 1066.8 662.7 1074.0 658.6" fill="none" stroke="#5e584f" stroke-width="1"/><path d="M550.0 664.6 C557.2 668.7 578.4 680.5 593.0 689.0 C607.6 697.5 623.0 707.7 637.8 715.7 C652.6 723.7 667.2 731.1 682.0 736.8 C696.8 742.5 711.9 746.9 726.7 750.0 C741.5 753.1 756.8 754.4 771.0 755.7 C785.2 757.0 798.3 758.0 812.0 758.0 C825.7 758.0 838.8 757.0 853.0 755.7 C867.2 754.4 882.5 753.1 897.3 750.0 C912.1 746.9 927.2 742.5 942.0 736.8 C956.8 731.1 971.4 723.7 986.2 715.7 C1001.0 707.7 1016.4 697.5 1031.0 689.0 C1045.6 680.5 1066.8 668.7 1074.0 664.6" fill="none" stroke="#5a544b" stroke-width="4" stroke-dasharray="2 16"/><path d="M472.0 790.0 C472.6 790.7 470.2 794.9 475.5 794.4 C480.8 793.9 491.8 790.0 504.0 786.7 C516.2 783.4 534.2 778.7 549.0 774.4 C563.8 770.1 580.0 765.4 593.0 761.0 C606.0 756.6 617.4 750.6 626.7 747.8 C636.0 745.0 639.8 744.8 649.0 744.4 C658.2 744.0 672.8 744.8 682.0 745.6 C691.2 746.4 696.9 747.1 704.4 749.0 C711.9 750.9 717.4 752.5 726.7 756.7 C736.0 760.9 749.6 768.1 760.0 774.4 C770.4 780.7 782.3 788.5 789.0 794.4 C795.7 800.3 797.6 805.2 800.0 810.0 C802.4 814.8 803.6 819.2 803.3 823.0 C803.0 826.8 797.4 829.7 798.0 833.0 C798.6 836.3 804.4 840.0 806.7 843.0 C809.0 846.0 811.1 849.7 812.0 851.0" fill="none" stroke="#857d6f" stroke-width="12.5"/><path d="M1152.0 790.0 C1151.4 790.7 1153.8 794.9 1148.5 794.4 C1143.2 793.9 1132.2 790.0 1120.0 786.7 C1107.8 783.4 1089.8 778.7 1075.0 774.4 C1060.2 770.1 1044.0 765.4 1031.0 761.0 C1018.0 756.6 1006.6 750.6 997.3 747.8 C988.0 745.0 984.2 744.8 975.0 744.4 C965.8 744.0 951.2 744.8 942.0 745.6 C932.8 746.4 927.1 747.1 919.6 749.0 C912.1 750.9 906.6 752.5 897.3 756.7 C888.0 760.9 874.4 768.1 864.0 774.4 C853.6 780.7 841.7 788.5 835.0 794.4 C828.3 800.3 826.4 805.2 824.0 810.0 C821.6 814.8 820.4 819.2 820.7 823.0 C821.0 826.8 826.6 829.7 826.0 833.0 C825.4 836.3 819.6 840.0 817.3 843.0 C815.0 846.0 812.9 849.7 812.0 851.0" fill="none" stroke="#857d6f" stroke-width="12.5"/><path d="M472.0 781.0 C472.6 781.7 470.2 785.9 475.5 785.4 C480.8 784.9 491.8 781.0 504.0 777.7 C516.2 774.4 534.2 769.7 549.0 765.4 C563.8 761.1 580.0 756.4 593.0 752.0 C606.0 747.6 617.4 741.6 626.7 738.8 C636.0 736.0 639.8 735.8 649.0 735.4 C658.2 735.0 672.8 735.8 682.0 736.6 C691.2 737.4 700.7 739.4 704.4 740.0" fill="none" stroke="#5a544b" stroke-width="4" stroke-dasharray="2 17"/><path d="M1152.0 781.0 C1151.4 781.7 1153.8 785.9 1148.5 785.4 C1143.2 784.9 1132.2 781.0 1120.0 777.7 C1107.8 774.4 1089.8 769.7 1075.0 765.4 C1060.2 761.1 1044.0 756.4 1031.0 752.0 C1018.0 747.6 1006.6 741.6 997.3 738.8 C988.0 736.0 984.2 735.8 975.0 735.4 C965.8 735.0 951.2 735.8 942.0 736.6 C932.8 737.4 923.3 739.4 919.6 740.0" fill="none" stroke="#5a544b" stroke-width="4" stroke-dasharray="2 17"/><path d="M550.0 656.1 C557.2 660.2 578.4 672.0 593.0 680.5 C607.6 689.0 623.0 699.2 637.8 707.2 C652.6 715.2 667.2 722.6 682.0 728.3 C696.8 734.0 711.9 738.4 726.7 741.5 C741.5 744.6 756.8 745.9 771.0 747.2 C785.2 748.5 798.3 749.5 812.0 749.5 C825.7 749.5 838.8 748.5 853.0 747.2 C867.2 745.9 882.5 744.6 897.3 741.5 C912.1 738.4 927.2 734.0 942.0 728.3 C956.8 722.6 971.4 715.2 986.2 707.2 C1001.0 699.2 1016.4 689.0 1031.0 680.5 C1045.6 672.0 1066.8 660.2 1074.0 656.1" fill="none" stroke="#1c1b1a" stroke-width="3"/><path d="M550.0 645.6 C557.2 649.7 578.4 661.5 593.0 670.0 C607.6 678.5 623.0 688.7 637.8 696.7 C652.6 704.7 667.2 712.1 682.0 717.8 C696.8 723.5 711.9 727.9 726.7 731.0 C741.5 734.1 756.8 735.4 771.0 736.7 C785.2 738.0 798.3 739.0 812.0 739.0 C825.7 739.0 838.8 738.0 853.0 736.7 C867.2 735.4 882.5 734.1 897.3 731.0 C912.1 727.9 927.2 723.5 942.0 717.8 C956.8 712.1 971.4 704.7 986.2 696.7 C1001.0 688.7 1016.4 678.5 1031.0 670.0 C1045.6 661.5 1066.8 649.7 1074.0 645.6" fill="none" stroke="#8b8375" stroke-width="17"/><path d="M813 763 q4 -2 7 1 q5 1 4 6 q3 4 -2 7 q-1 5 -6 4 l-3 5 l-3 -5 q-5 1 -6 -4 q-5 -3 -2 -7 q-1 -5 4 -6 q3 -3 7 -1z" fill="#5d5954"/><ellipse cx="807" cy="771" rx="2" ry="1.2" fill="#7c7873"/><ellipse cx="819" cy="771" rx="2" ry="1.2" fill="#7c7873"/><path d="M812 828 v20" stroke="#111" stroke-width="3"/></g><path d="M962 709 L976 702 M1000 691 L1022 680 M1054 660 L1060 657" stroke="#a01010" stroke-width="1.6" fill="none" transform="translate(0,-2.2)"/><path d="M550.0 645.6 C557.2 649.7 578.4 661.5 593.0 670.0 C607.6 678.5 623.0 688.7 637.8 696.7 C652.6 704.7 667.2 712.1 682.0 717.8 C696.8 723.5 711.9 727.9 726.7 731.0 C741.5 734.1 756.8 735.4 771.0 736.7 C785.2 738.0 798.3 739.0 812.0 739.0 C825.7 739.0 838.8 738.0 853.0 736.7 C867.2 735.4 882.5 734.1 897.3 731.0 C912.1 727.9 927.2 723.5 942.0 717.8 C956.8 712.1 971.4 704.7 986.2 696.7 C1001.0 688.7 1016.4 678.5 1031.0 670.0 C1045.6 661.5 1066.8 649.7 1074.0 645.6 L1074.0 645.6 C1076.4 650.4 1083.5 663.3 1088.5 674.4 C1093.5 685.5 1099.2 699.4 1104.0 712.0 C1108.8 724.6 1112.8 740.0 1117.3 750.0 C1121.8 760.0 1125.2 765.3 1131.0 772.0 C1136.8 778.7 1148.5 787.0 1152.0 790.0 L1152.0 790.0 C1151.4 790.7 1153.8 794.9 1148.5 794.4 C1143.2 793.9 1132.2 790.0 1120.0 786.7 C1107.8 783.4 1089.8 778.7 1075.0 774.4 C1060.2 770.1 1044.0 765.4 1031.0 761.0 C1018.0 756.6 1006.6 750.6 997.3 747.8 C988.0 745.0 984.2 744.8 975.0 744.4 C965.8 744.0 951.2 744.8 942.0 745.6 C932.8 746.4 927.1 747.1 919.6 749.0 C912.1 750.9 906.6 752.5 897.3 756.7 C888.0 760.9 874.4 768.1 864.0 774.4 C853.6 780.7 841.7 788.5 835.0 794.4 C828.3 800.3 826.4 805.2 824.0 810.0 C821.6 814.8 820.4 819.2 820.7 823.0 C821.0 826.8 826.6 829.7 826.0 833.0 C825.4 836.3 819.6 840.0 817.3 843.0 C815.0 846.0 812.9 849.7 812.0 851.0 L812.0 851.0 C811.1 849.7 809.0 846.0 806.7 843.0 C804.4 840.0 798.6 836.3 798.0 833.0 C797.4 829.7 803.0 826.8 803.3 823.0 C803.6 819.2 802.4 814.8 800.0 810.0 C797.6 805.2 795.7 800.3 789.0 794.4 C782.3 788.5 770.4 780.7 760.0 774.4 C749.6 768.1 736.0 760.9 726.7 756.7 C717.4 752.5 711.9 750.9 704.4 749.0 C696.9 747.1 691.2 746.4 682.0 745.6 C672.8 744.8 658.2 744.0 649.0 744.4 C639.8 744.8 636.0 745.0 626.7 747.8 C617.4 750.6 606.0 756.6 593.0 761.0 C580.0 765.4 563.8 770.1 549.0 774.4 C534.2 778.7 516.2 783.4 504.0 786.7 C491.8 790.0 480.8 793.9 475.5 794.4 C470.2 794.9 472.6 790.7 472.0 790.0 L472.0 790.0 C475.5 787.0 487.2 778.7 493.0 772.0 C498.8 765.3 502.2 760.0 506.7 750.0 C511.2 740.0 515.2 724.6 520.0 712.0 C524.8 699.4 530.5 685.5 535.5 674.4 C540.5 663.3 547.6 650.4 550.0 645.6 Z" fill="none" stroke="#000" stroke-width="1"/><path d="M550.0 645.6 C557.2 649.7 578.4 661.5 593.0 670.0 C607.6 678.5 623.0 688.7 637.8 696.7 C652.6 704.7 667.2 712.1 682.0 717.8 C696.8 723.5 711.9 727.9 726.7 731.0 C741.5 734.1 756.8 735.4 771.0 736.7 C785.2 738.0 798.3 739.0 812.0 739.0 C825.7 739.0 838.8 738.0 853.0 736.7 C867.2 735.4 882.5 734.1 897.3 731.0 C912.1 727.9 927.2 723.5 942.0 717.8 C956.8 712.1 971.4 704.7 986.2 696.7 C1001.0 688.7 1016.4 678.5 1031.0 670.0 C1045.6 661.5 1066.8 649.7 1074.0 645.6 L1074.0 645.6 C1076.4 650.4 1083.5 663.3 1088.5 674.4 C1093.5 685.5 1099.2 699.4 1104.0 712.0 C1108.8 724.6 1112.8 740.0 1117.3 750.0 C1121.8 760.0 1125.2 765.3 1131.0 772.0 C1136.8 778.7 1148.5 787.0 1152.0 790.0 L1152.0 790.0 C1151.4 790.7 1153.8 794.9 1148.5 794.4 C1143.2 793.9 1132.2 790.0 1120.0 786.7 C1107.8 783.4 1089.8 778.7 1075.0 774.4 C1060.2 770.1 1044.0 765.4 1031.0 761.0 C1018.0 756.6 1006.6 750.6 997.3 747.8 C988.0 745.0 984.2 744.8 975.0 744.4 C965.8 744.0 951.2 744.8 942.0 745.6 C932.8 746.4 927.1 747.1 919.6 749.0 C912.1 750.9 906.6 752.5 897.3 756.7 C888.0 760.9 874.4 768.1 864.0 774.4 C853.6 780.7 841.7 788.5 835.0 794.4 C828.3 800.3 826.4 805.2 824.0 810.0 C821.6 814.8 820.4 819.2 820.7 823.0 C821.0 826.8 826.6 829.7 826.0 833.0 C825.4 836.3 819.6 840.0 817.3 843.0 C815.0 846.0 812.9 849.7 812.0 851.0 L812.0 851.0 C811.1 849.7 809.0 846.0 806.7 843.0 C804.4 840.0 798.6 836.3 798.0 833.0 C797.4 829.7 803.0 826.8 803.3 823.0 C803.6 819.2 802.4 814.8 800.0 810.0 C797.6 805.2 795.7 800.3 789.0 794.4 C782.3 788.5 770.4 780.7 760.0 774.4 C749.6 768.1 736.0 760.9 726.7 756.7 C717.4 752.5 711.9 750.9 704.4 749.0 C696.9 747.1 691.2 746.4 682.0 745.6 C672.8 744.8 658.2 744.0 649.0 744.4 C639.8 744.8 636.0 745.0 626.7 747.8 C617.4 750.6 606.0 756.6 593.0 761.0 C580.0 765.4 563.8 770.1 549.0 774.4 C534.2 778.7 516.2 783.4 504.0 786.7 C491.8 790.0 480.8 793.9 475.5 794.4 C470.2 794.9 472.6 790.7 472.0 790.0 L472.0 790.0 C475.5 787.0 487.2 778.7 493.0 772.0 C498.8 765.3 502.2 760.0 506.7 750.0 C511.2 740.0 515.2 724.6 520.0 712.0 C524.8 699.4 530.5 685.5 535.5 674.4 C540.5 663.3 547.6 650.4 550.0 645.6 Z" fill="none" stroke="#fff" stroke-width="1" stroke-dasharray="3 3"/><rect x="91" y="109" width="14" height="22" fill="#0a000a"/><rect x="92" y="110" width="12" height="20" fill="#00ff00"/><rect x="96" y="114" width="9" height="4" fill="#0a000a"/><rect x="97" y="115" width="8" height="2" fill="#303030"/><rect x="96" y="122" width="4" height="4" fill="#0a000a"/><rect x="97" y="123" width="2" height="2" fill="#303030"/></svg><div style="position:absolute;left:3.5px;top:142.5px;width:32px;height:25px;background:#383838;border:1px solid #4a4a4a;border-radius:4px;box-sizing:border-box"></div><svg style="left:6.5px;top:91.5px" width="24" height="24"><path d="M11.9 6 V18 M6 11.8 H18" fill="none" stroke="#dcdcdc" stroke-width="1.5"/><path d="M11.9 4.2 L14.6 7.6 H9.2Z M11.9 19.4 L14.6 16 H9.2Z M4.3 11.8 L7.7 9.1 V14.5Z M19.5 11.8 L16.1 9.1 V14.5Z" fill="#dcdcdc"/></svg><svg style="left:6.5px;top:116.5px" width="24" height="24"><rect x="5" y="6" width="15" height="12" fill="none" stroke="#dcdcdc" stroke-width="1.3" stroke-dasharray="3.2 1.8" stroke-dashoffset="1.6"/></svg><svg style="left:29px;top:135.1px" width="4" height="4"><path d="M3.2 0 V3.2 H0Z" fill="#c2c2c2"/></svg><svg style="left:6.5px;top:143px" width="24" height="24"><path d="M10.5 14 L5 5.5 L14 9.2 L20.4 3.5 L20.8 12.5 L13.2 15" fill="none" stroke="#dcdcdc" stroke-width="1.3" stroke-linejoin="miter"/><path d="M10 15.2 L5.2 17.8 M11.2 16.2 L9.8 19.4" fill="none" stroke="#dcdcdc" stroke-width="1.3"/><circle cx="11.5" cy="14.8" r="1.5" fill="#383838" stroke="#dcdcdc" stroke-width="1.1"/></svg><svg style="left:29px;top:161.6px" width="4" height="4"><path d="M3.2 0 V3.2 H0Z" fill="#c2c2c2"/></svg><svg style="left:6.5px;top:169px" width="24" height="24"><circle cx="8" cy="12.3" r="4.6" fill="none" stroke="#dcdcdc" stroke-width="1.4" stroke-dasharray="1.1 1.3"/><path d="M20.4 5.4 Q21.6 5 21.6 6.4 L17.4 13.4 L15 11.6 Z" fill="#dcdcdc"/><path d="M14.6 12 L17 13.9 Q16.6 17 13 17.2 Q11.4 17.4 10.6 17 Q13 15.2 14.6 12Z" fill="#dcdcdc"/></svg><svg style="left:29px;top:187.6px" width="4" height="4"><path d="M3.2 0 V3.2 H0Z" fill="#c2c2c2"/></svg><svg style="left:6.5px;top:195px" width="24" height="24"><path d="M2.7 7.2 H5.6 M8 3.3 V16.3 H16.2 M8 7.2 H16.7 V19.7 M18.6 16.3 H21" fill="none" stroke="#dcdcdc" stroke-width="1.9"/></svg><svg style="left:29px;top:213.6px" width="4" height="4"><path d="M3.2 0 V3.2 H0Z" fill="#c2c2c2"/></svg><svg style="left:6.5px;top:221px" width="24" height="24"><path d="M14 9.5 L6.5 17 Q5.3 18.6 6.6 19.6 Q7.8 20.4 9 19 L16.2 11.8" fill="none" stroke="#dcdcdc" stroke-width="1.3"/><path d="M13 7.5 L18.3 12.8 L19.4 11.7 L17.8 10.1 L20.2 7.2 Q21 5 19.5 4 Q18 3.2 16.6 4.6 L14.4 6.6 L13.9 6.2 Z" fill="#dcdcdc"/></svg><svg style="left:29px;top:239.6px" width="4" height="4"><path d="M3.2 0 V3.2 H0Z" fill="#c2c2c2"/></svg><svg style="left:6.5px;top:247px" width="24" height="24"><circle cx="8" cy="8.5" r="3.8" fill="none" stroke="#dcdcdc" stroke-width="1.1" stroke-dasharray="1 1.2"/><g transform="rotate(-42 12.5 13)"><rect x="3.5" y="9.8" width="4.8" height="6.6" rx="0.8" fill="#dcdcdc"/><rect x="16.7" y="9.8" width="4.8" height="6.6" rx="0.8" fill="#dcdcdc"/><rect x="9" y="9.8" width="7" height="6.6" fill="#dcdcdc"/><rect x="10.2" y="11" width="1.6" height="1.6" fill="#535353"/><rect x="13.2" y="11" width="1.6" height="1.6" fill="#535353"/><rect x="10.2" y="13.7" width="1.6" height="1.6" fill="#535353"/><rect x="13.2" y="13.7" width="1.6" height="1.6" fill="#535353"/></g></svg><svg style="left:29px;top:265.6px" width="4" height="4"><path d="M3.2 0 V3.2 H0Z" fill="#c2c2c2"/></svg><svg style="left:6.5px;top:273px" width="24" height="24"><path d="M19 4.2 Q20.6 3.6 20.6 5.2 L14.6 14.6 L12 12.7 Z" fill="#dcdcdc"/><path d="M11.4 13.2 L14 15.2 Q13.8 18.8 10 19.2 Q7 19.4 5 20 Q7.4 18.2 7.8 16.2 Q8.4 13.4 11.4 13.2Z" fill="#dcdcdc"/></svg><svg style="left:29px;top:291.6px" width="4" height="4"><path d="M3.2 0 V3.2 H0Z" fill="#c2c2c2"/></svg><svg style="left:6.5px;top:299px" width="24" height="24"><path d="M12.5 3.5 a3.3 3.3 0 0 1 2 6 Q13.8 11.3 15.5 12.6 H19.6 V15.6 H6.4 V12.6 H10.5 Q12.2 11.3 11.5 9.5 a3.3 3.3 0 0 1 1 -6Z" fill="#dcdcdc"/><rect x="7.4" y="17.2" width="11.2" height="1.3" fill="#dcdcdc"/></svg><svg style="left:29px;top:317.6px" width="4" height="4"><path d="M3.2 0 V3.2 H0Z" fill="#c2c2c2"/></svg><svg style="left:6.5px;top:325px" width="24" height="24"><path d="M19.8 4.2 Q21.4 3.6 21.4 5.2 L16.2 13.6 L13.8 11.8 Z" fill="#dcdcdc"/><path d="M13.2 12.4 L15.6 14.2 Q15.4 17.6 12 18 Q9.6 18.2 7.6 18.8 Q9.8 17 10.2 15.2 Q10.6 12.6 13.2 12.4Z" fill="#dcdcdc"/><path d="M5 9.2 L8.2 6.2 L9.6 9.6 Z" fill="#dcdcdc"/><path d="M8 7.5 Q11 5.6 14 6.6" fill="none" stroke="#dcdcdc" stroke-width="1.1"/><path d="M19.8 10 Q20.6 14 17 16.6" fill="none" stroke="#dcdcdc" stroke-width="1.1" stroke-dasharray="1 1.3"/></svg><svg style="left:29px;top:343.6px" width="4" height="4"><path d="M3.2 0 V3.2 H0Z" fill="#c2c2c2"/></svg><svg style="left:6.5px;top:351px" width="24" height="24"><path d="M15.8 4.6 L20.6 9.2 L14 15.6 L9 11 Z" fill="#dcdcdc"/><path d="M9 11 L14 15.6 L12 17.6 H8.2 L5.2 14.6 Z" fill="none" stroke="#dcdcdc" stroke-width="1.1"/><path d="M12 17.7 H20.2" fill="none" stroke="#dcdcdc" stroke-width="1.1"/></svg><svg style="left:29px;top:369.6px" width="4" height="4"><path d="M3.2 0 V3.2 H0Z" fill="#c2c2c2"/></svg><svg style="left:6.5px;top:377px" width="24" height="24"><path d="M11.2 5.2 L19 13 L11.6 20 L4.8 13.4 Z" fill="none" stroke="#dcdcdc" stroke-width="1.3"/><path d="M9.6 3.6 Q8.2 4.2 8.8 6 L13.2 12.4" fill="none" stroke="#dcdcdc" stroke-width="1.2"/><circle cx="13.2" cy="12.4" r="1.2" fill="#dcdcdc"/><path d="M20.6 14.2 Q22.6 17.2 21.8 18.6 Q20.6 20 19.4 18.6 Q18.8 17 20.6 14.2Z" fill="#dcdcdc"/></svg><svg style="left:29px;top:395.6px" width="4" height="4"><path d="M3.2 0 V3.2 H0Z" fill="#c2c2c2"/></svg><svg style="left:6.5px;top:403px" width="24" height="24"><path d="M8 5.4 Q9 3 13 3.2 L18 3 Q19.8 3.4 19.6 6 Q20 10 17.4 11 Q15.6 12.8 13.6 12 Q11 16 8 18.4 Q5.6 19.4 5 17.8 Q7.8 13.2 8.8 9.8 Q6.8 7.8 8 5.4Z" fill="#dcdcdc"/><path d="M9.4 15.4 Q13 12 15.4 8 M14.6 12 Q16.6 10 17.4 8" fill="none" stroke="#535353" stroke-width="1.2"/></svg><svg style="left:29px;top:421.6px" width="4" height="4"><path d="M3.2 0 V3.2 H0Z" fill="#c2c2c2"/></svg><svg style="left:6.5px;top:429px" width="24" height="24"><circle cx="14.4" cy="9.9" r="5" fill="#dcdcdc"/><path d="M11 13.4 L5 19.4" fill="none" stroke="#dcdcdc" stroke-width="1.8"/></svg><svg style="left:29px;top:447.6px" width="4" height="4"><path d="M3.2 0 V3.2 H0Z" fill="#c2c2c2"/></svg><svg style="left:6.5px;top:455px" width="24" height="24"><path d="M7.3 5.2 H19.7 V9.4 H18.6 Q18.4 7.6 16.8 7.6 H15.2 V16.8 Q15.2 17.9 17.2 18 V19.3 H9.8 V18 Q11.8 17.9 11.8 16.8 V7.6 H10.2 Q8.6 7.6 8.4 9.4 H7.3 Z" fill="#dcdcdc"/></svg><svg style="left:29px;top:473.6px" width="4" height="4"><path d="M3.2 0 V3.2 H0Z" fill="#c2c2c2"/></svg><svg style="left:6.5px;top:481px" width="24" height="24"><path d="M16.2 4.2 L20.6 8.4 L18.4 10.6 L14 6.4 Z" fill="#dcdcdc"/><path d="M13.4 7 L17.8 11.2 Q17.6 15.6 13.6 17.6 L5.6 19.6 L7.6 11.4 Q9.6 7.6 13.4 7Z" fill="none" stroke="#dcdcdc" stroke-width="1.3"/><path d="M5.8 19.4 L11.6 13.4" fill="none" stroke="#dcdcdc" stroke-width="1.1"/><circle cx="12.2" cy="12.8" r="1.3" fill="#dcdcdc"/></svg><svg style="left:29px;top:499.6px" width="4" height="4"><path d="M3.2 0 V3.2 H0Z" fill="#c2c2c2"/></svg><svg style="left:6.5px;top:507px" width="24" height="24"><path d="M8.2 3.6 L8.2 16.6 L11.4 13.8 L13.8 19 L15.8 18 L13.4 13 L17.6 12.8 Z" fill="#111" stroke="#dcdcdc" stroke-width="1.1" stroke-linejoin="miter"/></svg><svg style="left:29px;top:525.6px" width="4" height="4"><path d="M3.2 0 V3.2 H0Z" fill="#c2c2c2"/></svg><svg style="left:6.5px;top:533px" width="24" height="24"><path d="M11.4 4.6 Q13.4 3.8 14.2 6.4 Q14.6 8.2 16.8 7.2 Q19.6 6.2 20.2 8.2 Q20.4 10.2 17.8 11.2 Q16 12.4 17.4 14.4 Q18.6 16.8 16.6 17.4 Q14.6 17.8 13.6 15.6 Q12.6 14.2 11 15.8 Q8.6 18.6 6.4 17.4 Q4.8 15.8 7.4 13.4 Q9.2 11.6 7.6 10.2 Q5.8 8.4 7.6 7.2 Q9.6 6.4 10.6 7.4 Q11.2 6.2 11.4 4.6Z" fill="#777" stroke="#dcdcdc" stroke-width="1.1"/></svg><svg style="left:29px;top:551.6px" width="4" height="4"><path d="M3.2 0 V3.2 H0Z" fill="#c2c2c2"/></svg><svg style="left:6.5px;top:559px" width="24" height="24"><path d="M6.6 8.6 Q10.6 3.4 16.6 6.4" fill="none" stroke="#dcdcdc" stroke-width="1.1"/><path d="M15.2 4.2 L19.8 7.8 L14.4 8.6 Z" fill="#dcdcdc"/><path d="M13 6.4 L19.8 12.8 L13 19.2 Z" fill="#dcdcdc"/><path d="M7.4 19.4 Q5.6 17.6 4.2 14.8 Q5.2 13.6 6.6 15.2 L6.6 9.8 Q7.4 8.8 8.2 9.8 L8.2 8.4 Q9.2 7.4 10 8.4 L10 9 Q11 8.2 11.6 9.2 L11.8 10.2 Q12.8 9.6 13.2 10.8 L13.2 16 Q13.2 18.4 11.8 19.6 Z" fill="#dcdcdc" stroke="#535353" stroke-width="0.5"/></svg><svg style="left:29px;top:577.6px" width="4" height="4"><path d="M3.2 0 V3.2 H0Z" fill="#c2c2c2"/></svg><svg style="left:6.5px;top:585px" width="24" height="24"><circle cx="10.2" cy="10" r="5.6" fill="none" stroke="#dcdcdc" stroke-width="1.5"/><path d="M14.4 14.2 L20 19.8" fill="none" stroke="#dcdcdc" stroke-width="2.2"/><path d="M8.4 7 Q10.6 5.8 12.6 7.4" fill="none" stroke="#dcdcdc" stroke-width="0.9"/></svg><svg style="left:6.5px;top:611px" width="24" height="24"><circle cx="6.3" cy="12" r="1.9" fill="#dcdcdc"/><circle cx="12.3" cy="12" r="1.9" fill="#dcdcdc"/><circle cx="18.3" cy="12" r="1.9" fill="#dcdcdc"/></svg><svg style="left:29px;top:629.6px" width="4" height="4"><path d="M3.2 0 V3.2 H0Z" fill="#c2c2c2"/></svg><svg style="left:3px;top:641px" width="14" height="14"><rect x="4" y="4" width="8" height="8" fill="#e0e0e0"/><rect x="1.5" y="1.5" width="6.5" height="6.5" fill="#111" stroke="#e0e0e0" stroke-width="1"/></svg><svg style="left:20px;top:640px" width="14" height="13"><path d="M4 4 H9.5 V9.5" fill="none" stroke="#dcdcdc" stroke-width="1.4"/><path d="M1.2 4 L5 1 V7Z M9.5 11.8 L6.5 8 H12.5Z" fill="#dcdcdc"/></svg><div style="position:absolute;left:14px;top:667px;width:20px;height:20px;background:#222;"></div><div style="position:absolute;left:15px;top:668px;width:18px;height:18px;background:#fff;"></div><div style="position:absolute;left:16px;top:669px;width:16px;height:16px;background:#0000ff;"></div><div style="position:absolute;left:4px;top:657px;width:20px;height:20px;background:#2a2a2a;"></div><div style="position:absolute;left:4px;top:657px;width:19px;height:19px;background:#fff;"></div><svg style="left:9px;top:697px" width="20" height="16"><rect x="1.6" y="1.6" width="16" height="12" fill="none" stroke="#dcdcdc" stroke-width="1.3"/><circle cx="9.6" cy="7.6" r="3.7" fill="none" stroke="#dcdcdc" stroke-width="1.1" stroke-dasharray="1 1.1"/></svg><svg style="left:9px;top:723px" width="20" height="16"><rect x="6.6" y="1.6" width="11.6" height="8.6" fill="none" stroke="#dcdcdc" stroke-width="1.3"/><rect x="1.6" y="4.6" width="10.8" height="9" fill="#535353" stroke="#dcdcdc" stroke-width="1.3"/><rect x="6.6" y="1.6" width="11.6" height="8.6" fill="#535353" stroke="#dcdcdc" stroke-width="1.3"/></svg><svg style="left:29px;top:737px" width="4" height="4"><path d="M3.2 0 V3.2 H0Z" fill="#c2c2c2"/></svg><svg style="left:1607px;top:64px" width="10" height="8"><path d="M4 1.2 L1 3.7 L4 6.2Z M8.2 1.2 L5.2 3.7 L8.2 6.2Z" fill="#cfcfcf"/></svg><svg style="left:1905px;top:64px" width="10" height="8"><path d="M1 1.2 L4 3.7 L1 6.2Z M5.2 1.2 L8.2 3.7 L5.2 6.2Z" fill="#cfcfcf"/></svg><div style="position:absolute;left:1584px;top:142px;width:37px;height:1px;background:#3a3a3a;"></div><div style="position:absolute;left:1584px;top:183px;width:37px;height:1px;background:#3a3a3a;"></div><div style="position:absolute;left:1584px;top:252px;width:37px;height:1px;background:#3a3a3a;"></div><div style="position:absolute;left:1584px;top:293px;width:37px;height:1px;background:#3a3a3a;"></div><div style="position:absolute;left:1584px;top:362px;width:37px;height:1px;background:#3a3a3a;"></div><div style="position:absolute;left:1584px;top:403px;width:37px;height:1px;background:#3a3a3a;"></div><div style="position:absolute;left:1593px;top:77px;width:19px;height:4px;background:repeating-linear-gradient(90deg,#454545 0 1px,transparent 1px 2px)"></div><div style="position:absolute;left:1593px;top:146px;width:19px;height:4px;background:repeating-linear-gradient(90deg,#454545 0 1px,transparent 1px 2px)"></div><div style="position:absolute;left:1593px;top:187px;width:19px;height:4px;background:repeating-linear-gradient(90deg,#454545 0 1px,transparent 1px 2px)"></div><div style="position:absolute;left:1593px;top:256px;width:19px;height:4px;background:repeating-linear-gradient(90deg,#454545 0 1px,transparent 1px 2px)"></div><div style="position:absolute;left:1593px;top:297px;width:19px;height:4px;background:repeating-linear-gradient(90deg,#454545 0 1px,transparent 1px 2px)"></div><div style="position:absolute;left:1593px;top:366px;width:19px;height:4px;background:repeating-linear-gradient(90deg,#454545 0 1px,transparent 1px 2px)"></div><svg style="left:1591px;top:85.5px" width="24" height="24"><rect x="6.6" y="4.1" width="4" height="3.6" fill="#535353" stroke="#dcdcdc" stroke-width="1.1"/><rect x="6.6" y="10.1" width="4" height="3.6" fill="#535353" stroke="#dcdcdc" stroke-width="1.1"/><rect x="6" y="15.8" width="5.2" height="4.6" fill="#dcdcdc"/><path d="M15.4 19 Q20.4 15 18.2 7" fill="none" stroke="#dcdcdc" stroke-width="1.6"/><path d="M13.6 8.6 L18.2 3.8 L20.2 10.2 Z" fill="#dcdcdc"/></svg><svg style="left:1591px;top:114px" width="24" height="24"><path d="M7 5.4 L20.6 12 L7 18.6 Z" fill="#dcdcdc"/></svg><svg style="left:1591px;top:154px" width="24" height="24"><path d="M9.4 4.2 L13.6 6.2 V11.6 L9.4 14 L5.2 11.6 V6.2 Z" fill="#777" stroke="#dcdcdc" stroke-width="1"/><path d="M5.2 6.2 L9.4 8.4 L13.6 6.2 M9.4 8.4 V14" fill="none" stroke="#dcdcdc" stroke-width="1"/><rect x="16" y="4" width="4" height="3.6" fill="#dcdcdc"/><rect x="16" y="9.4" width="4" height="3.4" fill="#dcdcdc"/><rect x="5" y="16" width="15" height="4" fill="#dcdcdc"/><path d="M16 17.2 h3 l-1.5 2z" fill="#444"/></svg><svg style="left:1591px;top:195px" width="24" height="24"><rect x="9" y="13" width="8.4" height="9" fill="#dcdcdc"/><path d="M12.6 13 V3 h2 V13 M10.6 13 L7.4 6 M15.4 13 L17.6 7.4" fill="none" stroke="#dcdcdc" stroke-width="1.2"/><path d="M6.6 2.6 Q9.6 5.6 8.8 9 L7 10 Q4.4 6.6 6.6 2.6Z M12.2 2 h2.8 v4.6 h-2.8z M16 6 Q17.6 3.8 20 5.4 Q20.2 7.4 17.6 8.8 Z" fill="#dcdcdc"/></svg><svg style="left:1591px;top:224px" width="24" height="24"><path d="M2.4 5.6 Q6 2.8 10.6 4.4 L11 8 Q6 9.8 2.4 5.6Z" fill="#dcdcdc"/><rect x="12" y="5.2" width="10" height="1.9" fill="#dcdcdc"/><rect x="4.4" y="13.2" width="9.8" height="1.9" fill="#dcdcdc"/><path d="M15.2 14.2 L20 9.4 Q22.6 14 20.2 19 Z" fill="#dcdcdc"/></svg><svg style="left:1591px;top:264px" width="24" height="24"><rect x="2" y="4.2" width="2" height="2" fill="#dcdcdc"/><rect x="2" y="7.4" width="2" height="2" fill="#dcdcdc"/><rect x="2" y="10.6" width="2" height="2" fill="#dcdcdc"/><path d="M5 5.2 h4 M5 8.4 h4 M5 11.6 h4" fill="none" stroke="#dcdcdc" stroke-width="1"/><path d="M14.2 5 a3 3 0 0 1 1.8 5.4 Q15.6 12 17 13.2 H20.6 V16 H8 V13.2 H11.4 Q12.8 12 12.4 10.4 a3 3 0 0 1 1.8 -5.4Z" fill="#dcdcdc"/><rect x="9" y="17.6" width="10.6" height="1.2" fill="#dcdcdc"/></svg><svg style="left:1594px;top:309px" width="22" height="20"><text x="1" y="15.5" font-size="17" fill="#dcdcdc" font-family='"Liberation Sans", sans-serif'>A</text><rect x="14.6" y="1.5" width="1.1" height="16" fill="#dcdcdc"/></svg><svg style="left:1591px;top:333.5px" width="24" height="24"><path d="M11 4.6 H17.6 V6 H16.6 V19.4 H15.2 V6 H13.6 V19.4 H12.2 V12 H11 a3.7 3.7 0 0 1 0 -7.4Z" fill="#dcdcdc"/></svg><svg style="left:1591px;top:374.5px" width="24" height="24"><path d="M12 3.6 L19 7.2 V16.2 L12 20.4 L5 16.2 V7.2 Z" fill="none" stroke="#dcdcdc" stroke-width="1.2"/><path d="M5 7.2 L12 11 L19 7.2 M12 11 V20.4" fill="none" stroke="#dcdcdc" stroke-width="1.2"/><path d="M5.8 8.4 L11.4 11.4 V19.2 L5.8 15.8Z" fill="#888"/></svg><div style="position:absolute;left:1624px;top:74px;width:296px;height:28px;background:#424242;"></div><div style="position:absolute;left:1624px;top:101px;width:296px;height:1px;background:#3a3a3a;"></div><div style="position:absolute;left:1624px;top:74px;width:70px;height:28px;background:#535353;"></div><div style="position:absolute;left:1694px;top:74px;width:1px;height:27px;background:#3a3a3a;"></div><div style="position:absolute;left:1736px;top:74px;width:1px;height:27px;background:#3a3a3a;"></div><svg style="left:1903px;top:84px" width="10" height="8"><path d="M0 0.5 H10 M0 2.5 H10 M0 4.5 H10 M0 6.5 H10" stroke="#c4c4c4" stroke-width="1" fill="none" shape-rendering="crispEdges"/></svg><div style="position:absolute;left:1624px;top:102px;width:296px;height:96px;background:#535353;"></div><div style="position:absolute;left:1628px;top:111px;width:198px;height:84px;background:#5e5e5e;"></div><div style="position:absolute;left:1629px;top:112px;width:196px;height:82px;background:#454545;"></div><svg width="1920" height="1080" style="left:0;top:0" shape-rendering="crispEdges"><rect x="1630" y="189.4" width="1" height="4.6" fill="#00ff00"/><rect x="1633" y="192.8" width="1" height="1.2" fill="#00ff00"/><rect x="1636" y="177.9" width="1" height="16.1" fill="#2020ff"/><rect x="1636" y="180.8" width="1" height="13.2" fill="#ff20e0"/><rect x="1636" y="183.3" width="1" height="10.7" fill="#728e72"/><rect x="1638" y="190.0" width="1" height="4.0" fill="#00ff00"/><rect x="1639" y="153.8" width="1" height="40.2" fill="#00ff00"/><rect x="1640" y="180.8" width="1" height="13.2" fill="#00ff00"/><rect x="1640" y="183.1" width="1" height="10.9" fill="#ffff00"/><rect x="1640" y="184.2" width="1" height="9.8" fill="#00ff00"/><rect x="1641" y="177.9" width="1" height="16.1" fill="#00ff00"/><rect x="1642" y="113.0" width="1" height="81.0" fill="#728e72"/><rect x="1643" y="164.7" width="1" height="29.3" fill="#00ff00"/><rect x="1645" y="113.0" width="1" height="81.0" fill="#00ff00"/><rect x="1645" y="113.0" width="1" height="81.0" fill="#00ff00"/><rect x="1647" y="142.9" width="1" height="51.1" fill="#e03010"/><rect x="1647" y="161.8" width="1" height="32.2" fill="#ff20e0"/><rect x="1648" y="113.0" width="1" height="81.0" fill="#728e72"/><rect x="1649" y="151.5" width="1" height="42.5" fill="#00ff00"/><rect x="1651" y="156.7" width="1" height="37.3" fill="#00ff00"/><rect x="1652" y="186.5" width="1" height="7.5" fill="#00ff00"/><rect x="1653" y="181.9" width="1" height="12.1" fill="#e03010"/><rect x="1653" y="185.4" width="1" height="8.6" fill="#00ff00"/><rect x="1654" y="181.9" width="1" height="12.1" fill="#00ff00"/><rect x="1655" y="175.0" width="1" height="19.0" fill="#e03010"/><rect x="1655" y="183.1" width="1" height="10.9" fill="#ff20e0"/><rect x="1657" y="190.0" width="1" height="4.0" fill="#00ff00"/><rect x="1659" y="187.7" width="1" height="6.3" fill="#2020ff"/><rect x="1659" y="190.5" width="1" height="3.5" fill="#00ff00"/><rect x="1660" y="188.2" width="1" height="5.8" fill="#00ff00"/><rect x="1660" y="191.1" width="1" height="2.9" fill="#20e0ff"/><rect x="1661" y="188.2" width="1" height="5.8" fill="#e03010"/><rect x="1661" y="191.1" width="1" height="2.9" fill="#00ff00"/><rect x="1663" y="188.8" width="1" height="5.2" fill="#ffff00"/><rect x="1664" y="190.5" width="1" height="3.5" fill="#00ff00"/><rect x="1665" y="192.3" width="1" height="1.7" fill="#00ff00"/><rect x="1666" y="191.7" width="1" height="2.3" fill="#ffff00"/><rect x="1667" y="190.0" width="1" height="4.0" fill="#e03010"/><rect x="1671" y="192.8" width="1" height="1.2" fill="#2020ff"/><rect x="1672" y="187.7" width="1" height="6.3" fill="#2020ff"/><rect x="1673" y="188.8" width="1" height="5.2" fill="#2020ff"/><rect x="1673" y="191.7" width="1" height="2.3" fill="#00ff00"/><rect x="1674" y="191.3" width="1" height="2.7" fill="#00ff00"/><rect x="1675" y="190.9" width="1" height="3.1" fill="#00ff00"/><rect x="1676" y="190.2" width="1" height="3.8" fill="#00ff00"/><rect x="1677" y="189.4" width="1" height="4.6" fill="#00ff00"/><rect x="1678" y="188.6" width="1" height="5.4" fill="#00ff00"/><rect x="1679" y="187.7" width="1" height="6.3" fill="#00ff00"/><rect x="1679" y="190.5" width="1" height="3.5" fill="#20e0ff"/><rect x="1680" y="176.2" width="1" height="17.8" fill="#2020ff"/><rect x="1680" y="190.0" width="1" height="4.0" fill="#00ff00"/><rect x="1681" y="190.0" width="1" height="4.0" fill="#00ff00"/><rect x="1682" y="183.1" width="1" height="10.9" fill="#00ff00"/><rect x="1683" y="190.0" width="1" height="4.0" fill="#00ff00"/><rect x="1683" y="192.8" width="1" height="1.2" fill="#ffff00"/><rect x="1684" y="178.5" width="1" height="15.5" fill="#2020ff"/><rect x="1684" y="187.7" width="1" height="6.3" fill="#ff20e0"/><rect x="1685" y="173.9" width="1" height="20.1" fill="#00ff00"/><rect x="1686" y="113.0" width="1" height="81.0" fill="#2020ff"/><rect x="1686" y="184.2" width="1" height="9.8" fill="#ff20e0"/><rect x="1687" y="190.5" width="1" height="3.5" fill="#00ff00"/><rect x="1688" y="149.8" width="1" height="44.2" fill="#00ff00"/><rect x="1688" y="173.9" width="1" height="20.1" fill="#20e0ff"/><rect x="1689" y="185.4" width="1" height="8.6" fill="#20e0ff"/><rect x="1689" y="191.1" width="1" height="2.9" fill="#00ff00"/><rect x="1690" y="164.7" width="1" height="29.3" fill="#2020ff"/><rect x="1690" y="184.2" width="1" height="9.8" fill="#00ff00"/><rect x="1691" y="185.4" width="1" height="8.6" fill="#00ff00"/><rect x="1692" y="113.0" width="1" height="81.0" fill="#2020ff"/><rect x="1692" y="149.2" width="1" height="44.8" fill="#ff20e0"/><rect x="1692" y="176.2" width="1" height="17.8" fill="#728e72"/><rect x="1693" y="176.2" width="1" height="17.8" fill="#00ff00"/><rect x="1694" y="175.0" width="1" height="19.0" fill="#00ff00"/><rect x="1695" y="173.9" width="1" height="20.1" fill="#00ff00"/><rect x="1696" y="192.3" width="1" height="1.7" fill="#2020ff"/><rect x="1697" y="164.7" width="1" height="29.3" fill="#00ff00"/><rect x="1697" y="177.9" width="1" height="16.1" fill="#ffff00"/><rect x="1697" y="186.5" width="1" height="7.5" fill="#728e72"/><rect x="1698" y="113.0" width="1" height="81.0" fill="#e03010"/><rect x="1698" y="145.2" width="1" height="48.8" fill="#ff20e0"/><rect x="1698" y="184.2" width="1" height="9.8" fill="#728e72"/><rect x="1699" y="180.8" width="1" height="13.2" fill="#2020ff"/><rect x="1699" y="185.9" width="1" height="8.1" fill="#00ff00"/><rect x="1700" y="171.0" width="1" height="23.0" fill="#00ff00"/><rect x="1701" y="173.9" width="1" height="20.1" fill="#00ff00"/><rect x="1702" y="183.1" width="1" height="10.9" fill="#00ff00"/><rect x="1703" y="176.2" width="1" height="17.8" fill="#e03010"/><rect x="1703" y="183.1" width="1" height="10.9" fill="#ffff00"/><rect x="1704" y="179.1" width="1" height="14.9" fill="#00ff00"/><rect x="1704" y="184.2" width="1" height="9.8" fill="#ffff00"/><rect x="1705" y="113.0" width="1" height="81.0" fill="#e03010"/><rect x="1705" y="180.2" width="1" height="13.8" fill="#ff20e0"/><rect x="1705" y="190.0" width="1" height="4.0" fill="#ffff00"/><rect x="1706" y="188.2" width="1" height="5.8" fill="#00ff00"/><rect x="1707" y="189.4" width="1" height="4.6" fill="#00ff00"/><rect x="1709" y="185.9" width="1" height="8.1" fill="#e03010"/><rect x="1709" y="191.7" width="1" height="2.3" fill="#ffff00"/><rect x="1710" y="191.7" width="1" height="2.3" fill="#00ff00"/><rect x="1711" y="137.2" width="1" height="56.8" fill="#e03010"/><rect x="1713" y="190.0" width="1" height="4.0" fill="#e03010"/><rect x="1715" y="191.1" width="1" height="2.9" fill="#e03010"/><rect x="1716" y="191.1" width="1" height="2.9" fill="#00ff00"/><rect x="1717" y="176.8" width="1" height="17.2" fill="#e03010"/><rect x="1723" y="191.7" width="1" height="2.3" fill="#e03010"/></svg><div style="position:absolute;left:1624px;top:198px;width:296px;height:2px;background:#3a3a3a;"></div><div style="position:absolute;left:1624px;top:200px;width:296px;height:28px;background:#424242;"></div><div style="position:absolute;left:1624px;top:228px;width:296px;height:1px;background:#3a3a3a;"></div><div style="position:absolute;left:1684px;top:200px;width:65px;height:29px;background:#535353;"></div><div style="position:absolute;left:1683px;top:200px;width:1px;height:28px;background:#3a3a3a;"></div><div style="position:absolute;left:1749px;top:200px;width:1px;height:28px;background:#3a3a3a;"></div><svg style="left:1903px;top:210px" width="10" height="8"><path d="M0 0.5 H10 M0 2.5 H10 M0 4.5 H10 M0 6.5 H10" stroke="#c4c4c4" stroke-width="1" fill="none" shape-rendering="crispEdges"/></svg><div style="position:absolute;left:1624px;top:229px;width:296px;height:112px;background:#535353;"></div><svg width="0" height="0"><defs><linearGradient id="gh" x1="0" x2="1" y1="0" y2="0"><stop offset="0" stop-color="#1e1e1e"/><stop offset="1" stop-color="#e8e8e8"/></linearGradient><linearGradient id="gs" x1="0" x2="1" y1="0" y2="0"><stop offset="0" stop-color="#222"/><stop offset=".25" stop-color="#999"/><stop offset=".5" stop-color="#333"/><stop offset=".75" stop-color="#aaa"/><stop offset="1" stop-color="#ddd"/></linearGradient><radialGradient id="gv" cx=".5" cy=".38" r=".5"><stop offset="0" stop-color="#555"/><stop offset="1" stop-color="#c8c8c8"/></radialGradient></defs></svg><svg style="left:1685.4px;top:257.7px" width="20" height="20"><circle cx="10" cy="10" r="4.4" fill="none" stroke="#dcdcdc" stroke-width="1.1"/><path d="M10 5.6 a4.4 4.4 0 0 1 0 8.8Z" fill="#dcdcdc"/><path d="M10 3.6 V1.4" transform="rotate(0 10 10)" stroke="#dcdcdc" stroke-width="1.2"/><path d="M10 3.6 V1.4" transform="rotate(45 10 10)" stroke="#dcdcdc" stroke-width="1.2"/><path d="M10 3.6 V1.4" transform="rotate(90 10 10)" stroke="#dcdcdc" stroke-width="1.2"/><path d="M10 3.6 V1.4" transform="rotate(135 10 10)" stroke="#dcdcdc" stroke-width="1.2"/><path d="M10 3.6 V1.4" transform="rotate(180 10 10)" stroke="#dcdcdc" stroke-width="1.2"/><path d="M10 3.6 V1.4" transform="rotate(225 10 10)" stroke="#dcdcdc" stroke-width="1.2"/><path d="M10 3.6 V1.4" transform="rotate(270 10 10)" stroke="#dcdcdc" stroke-width="1.2"/><path d="M10 3.6 V1.4" transform="rotate(315 10 10)" stroke="#dcdcdc" stroke-width="1.2"/></svg><svg style="left:1710px;top:257.7px" width="20" height="20"><path d="M1 15.5 V9 l1 -2 l1 3 l1 -1 l1 -4 l1 5 l1 -2 l1 -4 l1 3 l1 -5 l1 4 l1 1 l1 -5 l1 5 l1 1 l1 -3 l1 3 l1 -2 l1 3 V15.5Z" fill="#dcdcdc"/></svg><svg style="left:1733.8px;top:257.7px" width="20" height="20"><rect x="2.4" y="3.6" width="15.2" height="12.4" fill="none" stroke="#9a9a9a" stroke-width="1"/><path d="M7.4 3.6 V16 M12.6 3.6 V16 M2.4 7.8 H17.6 M2.4 11.8 H17.6" stroke="#9a9a9a" stroke-width="0.9"/><path d="M2.6 15.8 Q8 15.6 10 10 Q12 4 17.4 3.8" fill="none" stroke="#dcdcdc" stroke-width="1.2"/></svg><svg style="left:1758px;top:258.3px" width="20" height="20"><rect x="2.6" y="4.1" width="14.8" height="11.8" fill="none" stroke="#dcdcdc" stroke-width="1.2"/><path d="M2.6 15.9 L17.4 4.1 V15.9Z" fill="#dcdcdc"/><path d="M4.6 7.4 H8.2 M6.4 5.6 V9.2" fill="none" stroke="#dcdcdc" stroke-width="1"/><path d="M11.6 13 H15.4" stroke="#535353" stroke-width="1.1"/></svg><svg style="left:1781.5px;top:259.0px" width="20" height="20"><path d="M3 3.6 H17 L10 16.6 Z" fill="url(#gv)" stroke="#dcdcdc" stroke-width="1.3" stroke-linejoin="miter"/></svg><svg style="left:1674px;top:284.6px" width="20" height="20"><rect x="2.6" y="4.1" width="14.8" height="11.8" fill="none" stroke="#dcdcdc" stroke-width="1.2"/><rect x="3.8" y="5.3" width="12.4" height="3.6" fill="url(#gs)"/><rect x="3.8" y="10" width="12.4" height="4.7" fill="url(#gh)"/></svg><svg style="left:1697.9px;top:284.6px" width="20" height="20"><circle cx="10" cy="5.4" r="1.5" fill="none" stroke="#dcdcdc" stroke-width="1"/><path d="M3.6 6.4 H8.4 M11.6 6.4 H16.4" fill="none" stroke="#dcdcdc" stroke-width="1.1"/><path d="M4.6 6.4 L1.8 13.2 M4.6 6.4 L7.4 13.2 M15.4 6.4 L12.6 13.2 M15.4 6.4 L18.2 13.2" fill="none" stroke="#dcdcdc" stroke-width="0.9"/><path d="M1.2 13 H8 a3.4 3.4 0 0 1 -6.8 0Z M12 13 H18.8 a3.4 3.4 0 0 1 -6.8 0Z" fill="#dcdcdc"/></svg><svg style="left:1722px;top:284.6px" width="20" height="20"><rect x="2.6" y="4.1" width="14.8" height="11.8" fill="none" stroke="#dcdcdc" stroke-width="1.2"/><rect x="10" y="4.1" width="7.4" height="11.8" fill="#dcdcdc"/></svg><svg style="left:1745.5px;top:285.8px" width="20" height="20"><path d="M1.6 5.4 H5 L6.2 3.6 H10.2 L11.4 5.4 H15 V14 H1.6Z" fill="#dcdcdc"/><circle cx="8.2" cy="9.6" r="2.6" fill="#535353"/><circle cx="8.2" cy="9.6" r="1.6" fill="#dcdcdc"/><circle cx="15" cy="14.6" r="3.2" fill="#535353" stroke="#dcdcdc" stroke-width="1.1"/><circle cx="15" cy="14.6" r="1.7" fill="#777"/></svg><svg style="left:1769.4px;top:284.6px" width="20" height="20"><circle cx="10" cy="6.4" r="4.6" fill="#9a9a9a"/><circle cx="6.4" cy="12.6" r="4.6" fill="#dcdcdc"/><circle cx="13.6" cy="12.6" r="4.6" fill="#c4c4c4"/><circle cx="10" cy="10.6" r="2.2" fill="#666"/></svg><svg style="left:1794px;top:284.6px" width="20" height="20"><rect x="2.6" y="4.1" width="14.8" height="11.8" fill="#dcdcdc"/><rect x="4.0" y="5.4" width="3.3" height="2.5" fill="#aaa"/><rect x="8.4" y="5.4" width="3.3" height="2.5" fill="#666"/><rect x="12.8" y="5.4" width="3.3" height="2.5" fill="#555"/><rect x="4.0" y="9.0" width="3.3" height="2.5" fill="#777"/><rect x="8.4" y="9.0" width="3.3" height="2.5" fill="#4a4a4a"/><rect x="12.8" y="9.0" width="3.3" height="2.5" fill="#555"/><rect x="4.0" y="12.6" width="3.3" height="2.5" fill="#555"/><rect x="8.4" y="12.6" width="3.3" height="2.5" fill="#444"/><rect x="12.8" y="12.6" width="3.3" height="2.5" fill="#3c3c3c"/></svg><svg style="left:1686px;top:311.6px" width="20" height="20"><rect x="2.6" y="4.1" width="14.8" height="11.8" fill="none" stroke="#dcdcdc" stroke-width="1.2"/><path d="M3.4 15.2 L16.6 4.8" fill="none" stroke="#dcdcdc" stroke-width="1"/><ellipse cx="10" cy="10" rx="4.2" ry="3.4" fill="#dcdcdc"/><path d="M6.6 12.6 L13.4 7.4 A4.2 3.4 0 0 1 6.6 12.6Z" fill="#535353"/><path d="M3.2 15.4 L16.8 15.4 L16.8 4.6Z" fill="#dcdcdc" opacity="0"/></svg><svg style="left:1710px;top:311.6px" width="20" height="20"><rect x="2.6" y="4.1" width="14.8" height="11.8" fill="none" stroke="#dcdcdc" stroke-width="1.2"/><path d="M3.4 9 L9 4.8 H13 L3.4 12Z" fill="#bbb"/><path d="M3.4 14.4 L16.6 5 V8 L7 15.2 H3.4Z" fill="#999"/><path d="M10.6 15.2 L16.6 10.6 V13.2 L14 15.2Z" fill="#bbb"/></svg><svg style="left:1734px;top:311.6px" width="20" height="20"><rect x="2.6" y="4.1" width="14.8" height="11.8" fill="#dcdcdc"/><path d="M4 13.4 H6 V11.6 H8 V10 H10.4 V8.4 H12.6 V6.6 H15.4" fill="none" stroke="#3c3c3c" stroke-width="2"/><path d="M8.6 14.8 H13 V13.4 H15.6" fill="none" stroke="#3c3c3c" stroke-width="1.4"/></svg><svg style="left:1758px;top:311.6px" width="20" height="20"><rect x="2.6" y="4.1" width="14.8" height="11.8" fill="none" stroke="#dcdcdc" stroke-width="1.2"/><path d="M3.2 4.7 H16.8 L10 10Z" fill="#dcdcdc"/><path d="M3.2 4.7 L10 10 L3.2 15.3Z M16.8 4.7 L10 10 L16.8 15.3Z" fill="#777"/><path d="M3.2 15.3 H16.8 L10 10Z" fill="#aaa"/></svg><svg style="left:1782px;top:311.6px" width="20" height="20"><rect x="2.6" y="4.1" width="14.8" height="11.8" fill="none" stroke="#dcdcdc" stroke-width="1.2"/><rect x="3.6" y="5.1" width="12.8" height="9.8" fill="url(#gh)"/></svg><div style="position:absolute;left:1624px;top:341px;width:296px;height:3px;background:#3a3a3a;"></div><div style="position:absolute;left:1624px;top:344px;width:296px;height:28px;background:#424242;"></div><div style="position:absolute;left:1624px;top:371px;width:296px;height:1px;background:#3a3a3a;"></div><div style="position:absolute;left:1680px;top:344px;width:63px;height:29px;background:#535353;"></div><div style="position:absolute;left:1679px;top:344px;width:1px;height:27px;background:#3a3a3a;"></div><div style="position:absolute;left:1743px;top:344px;width:1px;height:27px;background:#3a3a3a;"></div><svg style="left:1903px;top:354px" width="10" height="8"><path d="M0 0.5 H10 M0 2.5 H10 M0 4.5 H10 M0 6.5 H10" stroke="#c4c4c4" stroke-width="1" fill="none" shape-rendering="crispEdges"/></svg><div style="position:absolute;left:1624px;top:372px;width:296px;height:5px;background:#535353;"></div><div style="position:absolute;left:1624px;top:377px;width:279px;height:677px;background:#4d4d4d;"></div><div style="position:absolute;left:1903px;top:377px;width:17px;height:677px;background:#535353;"></div><div style="position:absolute;left:1624px;top:377px;width:279px;height:36px;background:#6b6b6b;"></div><div style="position:absolute;left:1624px;top:413px;width:279px;height:1px;background:#484848;"></div><svg style="left:1628.5px;top:389.5px" width="14" height="10"><path d="M0.6 5 Q7 -2.6 13.4 5 Q7 12.6 0.6 5Z" fill="#e6e6e6"/><circle cx="7" cy="4.8" r="2.8" fill="#6b6b6b"/><circle cx="7" cy="4.8" r="1.7" fill="#555"/><circle cx="8" cy="3.8" r="0.8" fill="#ddd"/></svg><svg style="left:1649px;top:379px" width="33" height="33"><g transform="translate(0.5,0.5)"><rect x="0" y="0" width="32" height="32" fill="#000" stroke="#3d3d3d" stroke-width="1"/><path d="M5 10 l1 5 M27 10 l-1 5 M11.5 9 l1 4 M20.5 9 l-1 4 M4.5 15.5 h8 l2 -3 l1.8 3 l1.6 -3 l2 3 h8" fill="none" stroke="#3e3b36" stroke-width="0.9"/><path d="M4 21.5 Q9 24 16 24.4 Q23 24 28 21.5 M2.4 25 L5.4 20.6 L10 23.4 L16 27 L22 23.4 L26.6 20.6 L29.6 25" fill="none" stroke="#575248" stroke-width="0.9"/></g></svg><div style="position:absolute;left:1624px;top:414px;width:279px;height:36px;background:#6b6b6b;"></div><div style="position:absolute;left:1624px;top:450px;width:279px;height:1px;background:#484848;"></div><svg style="left:1628.5px;top:426.5px" width="14" height="10"><path d="M0.6 5 Q7 -2.6 13.4 5 Q7 12.6 0.6 5Z" fill="#e6e6e6"/><circle cx="7" cy="4.8" r="2.8" fill="#6b6b6b"/><circle cx="7" cy="4.8" r="1.7" fill="#555"/><circle cx="8" cy="3.8" r="0.8" fill="#ddd"/></svg><svg style="left:1649px;top:416px" width="33" height="33"><g transform="translate(0.5,0.5)"><rect x="0" y="0" width="32" height="32" fill="#000" stroke="#3d3d3d" stroke-width="1"/><path d="M5 10 l1 5 M27 10 l-1 5 M11.5 9 l1 4 M20.5 9 l-1 4 M4.5 15.5 h8 l2 -3 l1.8 3 l1.6 -3 l2 3 h8" fill="none" stroke="#3e3b36" stroke-width="0.9"/><path d="M4 21.5 Q9 24 16 24.4 Q23 24 28 21.5 M2.4 25 L5.4 20.6 L10 23.4 L16 27 L22 23.4 L26.6 20.6 L29.6 25" fill="none" stroke="#575248" stroke-width="0.9"/></g></svg><div style="position:absolute;left:1624px;top:451px;width:279px;height:36px;background:#6b6b6b;"></div><div style="position:absolute;left:1624px;top:487px;width:279px;height:1px;background:#484848;"></div><svg style="left:1628.5px;top:463.5px" width="14" height="10"><path d="M0.6 5 Q7 -2.6 13.4 5 Q7 12.6 0.6 5Z" fill="#e6e6e6"/><circle cx="7" cy="4.8" r="2.8" fill="#6b6b6b"/><circle cx="7" cy="4.8" r="1.7" fill="#555"/><circle cx="8" cy="3.8" r="0.8" fill="#ddd"/></svg><svg style="left:1649px;top:453px" width="33" height="33"><g transform="translate(0.5,0.5)"><rect x="0" y="0" width="32" height="32" fill="#000" stroke="#3d3d3d" stroke-width="1"/><path d="M5 10 l1 5 M27 10 l-1 5 M11.5 9 l1 4 M20.5 9 l-1 4 M4.5 15.5 h8 l2 -3 l1.8 3 l1.6 -3 l2 3 h8" fill="none" stroke="#3e3b36" stroke-width="0.9"/><path d="M4 21.5 Q9 24 16 24.4 Q23 24 28 21.5 M2.4 25 L5.4 20.6 L10 23.4 L16 27 L22 23.4 L26.6 20.6 L29.6 25" fill="none" stroke="#575248" stroke-width="0.9"/></g></svg><div style="position:absolute;left:1624px;top:488px;width:279px;height:36px;background:#6b6b6b;"></div><div style="position:absolute;left:1624px;top:524px;width:279px;height:1px;background:#484848;"></div><svg style="left:1628.5px;top:500.5px" width="14" height="10"><path d="M0.6 5 Q7 -2.6 13.4 5 Q7 12.6 0.6 5Z" fill="#e6e6e6"/><circle cx="7" cy="4.8" r="2.8" fill="#6b6b6b"/><circle cx="7" cy="4.8" r="1.7" fill="#555"/><circle cx="8" cy="3.8" r="0.8" fill="#ddd"/></svg><svg style="left:1649px;top:490px" width="33" height="33"><g transform="translate(0.5,0.5)"><rect x="0" y="0" width="32" height="32" fill="#000" stroke="#3d3d3d" stroke-width="1"/><path d="M5 10 l1 5 M27 10 l-1 5 M11.5 9 l1 4 M20.5 9 l-1 4 M4.5 15.5 h8 l2 -3 l1.8 3 l1.6 -3 l2 3 h8" fill="none" stroke="#3e3b36" stroke-width="0.9"/><path d="M4 21.5 Q9 24 16 24.4 Q23 24 28 21.5 M2.4 25 L5.4 20.6 L10 23.4 L16 27 L22 23.4 L26.6 20.6 L29.6 25" fill="none" stroke="#575248" stroke-width="0.9"/></g></svg><div style="position:absolute;left:1624px;top:1053px;width:296px;height:1px;background:#444;"></div><div style="position:absolute;left:1624px;top:1054px;width:296px;height:24px;background:#535353;"></div><svg style="left:1789px;top:1059px" width="13" height="13"><circle cx="6" cy="6" r="4.6" fill="none" stroke="#f2f2f2" stroke-width="1.4" stroke-dasharray="2 1.62"/></svg><svg style="left:1817px;top:1060px" width="14" height="11"><rect x="0" y="0" width="13.4" height="10" fill="#e0e0e0"/><circle cx="6.7" cy="5" r="2.7" fill="#4a4a4a"/></svg><svg style="left:1850px;top:1060px" width="13" height="12"><path d="M1.8 1.8 H10.8 V10.8 H5.2 L1.8 7.4 Z" fill="#464646" stroke="#e6e6e6" stroke-width="1.3"/><path d="M1.8 7 H5.4 V10.8 Z" fill="#e6e6e6"/></svg><svg style="left:1879px;top:1059px" width="12" height="13"><path d="M0.5 2.6 H10.5 M3.6 2.6 V1 H7.4 V2.6" fill="none" stroke="#9a9a9a" stroke-width="1"/><path d="M1.6 3.6 H9.4 V12 H1.6Z" fill="none" stroke="#9a9a9a" stroke-width="1"/><path d="M3.6 5 V10.6 M5.5 5 V10.6 M7.4 5 V10.6" stroke="#9a9a9a" stroke-width="0.9"/></svg><div style="position:absolute;left:1060px;top:291px;width:264px;height:422px;background:#f2f2f2;border:1px solid #c8c8c8;box-sizing:border-box;box-shadow:2px 2px 3px rgba(0,0,0,0.35)"></div><div style="position:absolute;left:1063px;top:513px;width:258px;height:22px;background:#91c9f7;"></div><div style="position:absolute;left:1091px;top:385px;width:230px;height:1px;background:#d4d4d4;"></div><div style="position:absolute;left:1091px;top:436px;width:230px;height:1px;background:#d4d4d4;"></div><div style="position:absolute;left:1091px;top:509px;width:230px;height:1px;background:#d4d4d4;"></div><div style="position:absolute;left:1091px;top:560px;width:230px;height:1px;background:#d4d4d4;"></div><div style="position:absolute;left:1091px;top:611px;width:230px;height:1px;background:#d4d4d4;"></div><div style="position:absolute;left:1091px;top:662px;width:230px;height:1px;background:#d4d4d4;"></div>
<svg width="1920" height="1080" style="left:0;top:0;pointer-events:none">
<text x="8" y="19" textLength="20" lengthAdjust="spacingAndGlyphs" font-size="21" fill="#86b0de" font-weight="bold" text-anchor="start">Ps</text><text x="46" y="16" textLength="51" lengthAdjust="spacingAndGlyphs" font-size="12" fill="#e6e6e6">ファイル(F)</text><text x="113" y="16" textLength="40" lengthAdjust="spacingAndGlyphs" font-size="12" fill="#e6e6e6">編集(E)</text><text x="169" y="16" textLength="50" lengthAdjust="spacingAndGlyphs" font-size="12" fill="#e6e6e6">イメージ(I)</text><text x="235" y="16" textLength="55" lengthAdjust="spacingAndGlyphs" font-size="12" fill="#e6e6e6">レイヤー(L)</text><text x="306" y="16" textLength="41" lengthAdjust="spacingAndGlyphs" font-size="12" fill="#e6e6e6">書式(Y)</text><text x="363" y="16" textLength="66" lengthAdjust="spacingAndGlyphs" font-size="12" fill="#e6e6e6">選択範囲(S)</text><text x="444" y="16" textLength="61" lengthAdjust="spacingAndGlyphs" font-size="12" fill="#e6e6e6">フィルター(T)</text><text x="522" y="16" textLength="31" lengthAdjust="spacingAndGlyphs" font-size="12" fill="#e6e6e6" font-weight="normal" text-anchor="start">3D(D)</text><text x="570" y="16" textLength="41" lengthAdjust="spacingAndGlyphs" font-size="12" fill="#e6e6e6">表示(V)</text><text x="627" y="16" textLength="65" lengthAdjust="spacingAndGlyphs" font-size="12" fill="#e6e6e6">ウィンドウ(W)</text><text x="708" y="16" textLength="49" lengthAdjust="spacingAndGlyphs" font-size="12" fill="#e6e6e6">ヘルプ(H)</text><text x="195" y="48.3" textLength="37" lengthAdjust="spacingAndGlyphs" font-size="12" fill="#c8c8c8">ぼかし :</text><text x="237" y="48.3" textLength="21" lengthAdjust="spacingAndGlyphs" font-size="12" fill="#e6e6e6" font-weight="normal" text-anchor="start">0 px</text><text x="327.5" y="48.3" textLength="70" lengthAdjust="spacingAndGlyphs" font-size="12" fill="#f0f0f0">アンチエイリアス</text><text x="436" y="48.3" textLength="69" lengthAdjust="spacingAndGlyphs" font-size="12" fill="#f0f0f0">選択とマスク...</text><text x="1754" y="48.3" textLength="43" lengthAdjust="spacingAndGlyphs" font-size="12" fill="#f0f0f0">モーション</text><text x="52" y="81" textLength="277" lengthAdjust="spacingAndGlyphs" font-size="12" fill="#ececec">pew_00_uw_0031.dds @ 66.7% (レイヤー 0, RGB/8) *</text><text x="96" y="104" textLength="14.7" lengthAdjust="spacingAndGlyphs" font-size="9.6" fill="#b6b6b6" font-weight="normal" text-anchor="start">200</text><text x="134" y="104" textLength="14.7" lengthAdjust="spacingAndGlyphs" font-size="9.6" fill="#b6b6b6" font-weight="normal" text-anchor="start">180</text><text x="172" y="104" textLength="14.7" lengthAdjust="spacingAndGlyphs" font-size="9.6" fill="#b6b6b6" font-weight="normal" text-anchor="start">160</text><text x="209" y="104" textLength="14.7" lengthAdjust="spacingAndGlyphs" font-size="9.6" fill="#b6b6b6" font-weight="normal" text-anchor="start">140</text><text x="247" y="104" textLength="14.7" lengthAdjust="spacingAndGlyphs" font-size="9.6" fill="#b6b6b6" font-weight="normal" text-anchor="start">120</text><text x="285" y="104" textLength="14.7" lengthAdjust="spacingAndGlyphs" font-size="9.6" fill="#b6b6b6" font-weight="normal" text-anchor="start">100</text><text x="323" y="104" textLength="9.8" lengthAdjust="spacingAndGlyphs" font-size="9.6" fill="#b6b6b6" font-weight="normal" text-anchor="start">80</text><text x="361" y="104" textLength="9.8" lengthAdjust="spacingAndGlyphs" font-size="9.6" fill="#b6b6b6" font-weight="normal" text-anchor="start">60</text><text x="398" y="104" textLength="9.8" lengthAdjust="spacingAndGlyphs" font-size="9.6" fill="#b6b6b6" font-weight="normal" text-anchor="start">40</text><text x="436" y="104" textLength="9.8" lengthAdjust="spacingAndGlyphs" font-size="9.6" fill="#b6b6b6" font-weight="normal" text-anchor="start">20</text><text x="474" y="104" textLength="4.9" lengthAdjust="spacingAndGlyphs" font-size="9.6" fill="#b6b6b6" font-weight="normal" text-anchor="start">0</text><text x="512" y="104" textLength="9.8" lengthAdjust="spacingAndGlyphs" font-size="9.6" fill="#b6b6b6" font-weight="normal" text-anchor="start">20</text><text x="550" y="104" textLength="9.8" lengthAdjust="spacingAndGlyphs" font-size="9.6" fill="#b6b6b6" font-weight="normal" text-anchor="start">40</text><text x="587" y="104" textLength="9.8" lengthAdjust="spacingAndGlyphs" font-size="9.6" fill="#b6b6b6" font-weight="normal" text-anchor="start">60</text><text x="625" y="104" textLength="9.8" lengthAdjust="spacingAndGlyphs" font-size="9.6" fill="#b6b6b6" font-weight="normal" text-anchor="start">80</text><text x="663" y="104" textLength="14.7" lengthAdjust="spacingAndGlyphs" font-size="9.6" fill="#b6b6b6" font-weight="normal" text-anchor="start">100</text><text x="701" y="104" textLength="14.7" lengthAdjust="spacingAndGlyphs" font-size="9.6" fill="#b6b6b6" font-weight="normal" text-anchor="start">120</text><text x="739" y="104" textLength="14.7" lengthAdjust="spacingAndGlyphs" font-size="9.6" fill="#b6b6b6" font-weight="normal" text-anchor="start">140</text><text x="776" y="104" textLength="14.7" lengthAdjust="spacingAndGlyphs" font-size="9.6" fill="#b6b6b6" font-weight="normal" text-anchor="start">160</text><text x="814" y="104" textLength="14.7" lengthAdjust="spacingAndGlyphs" font-size="9.6" fill="#b6b6b6" font-weight="normal" text-anchor="start">180</text><text x="852" y="104" textLength="14.7" lengthAdjust="spacingAndGlyphs" font-size="9.6" fill="#b6b6b6" font-weight="normal" text-anchor="start">200</text><text x="890" y="104" textLength="14.7" lengthAdjust="spacingAndGlyphs" font-size="9.6" fill="#b6b6b6" font-weight="normal" text-anchor="start">220</text><text x="928" y="104" textLength="14.7" lengthAdjust="spacingAndGlyphs" font-size="9.6" fill="#b6b6b6" font-weight="normal" text-anchor="start">240</text><text x="965" y="104" textLength="14.7" lengthAdjust="spacingAndGlyphs" font-size="9.6" fill="#b6b6b6" font-weight="normal" text-anchor="start">260</text><text x="1003" y="104" textLength="14.7" lengthAdjust="spacingAndGlyphs" font-size="9.6" fill="#b6b6b6" font-weight="normal" text-anchor="start">280</text><text x="1041" y="104" textLength="14.7" lengthAdjust="spacingAndGlyphs" font-size="9.6" fill="#b6b6b6" font-weight="normal" text-anchor="start">300</text><text x="1079" y="104" textLength="14.7" lengthAdjust="spacingAndGlyphs" font-size="9.6" fill="#b6b6b6" font-weight="normal" text-anchor="start">320</text><text x="1117" y="104" textLength="14.7" lengthAdjust="spacingAndGlyphs" font-size="9.6" fill="#b6b6b6" font-weight="normal" text-anchor="start">340</text><text x="1154" y="104" textLength="14.7" lengthAdjust="spacingAndGlyphs" font-size="9.6" fill="#b6b6b6" font-weight="normal" text-anchor="start">360</text><text x="1192" y="104" textLength="14.7" lengthAdjust="spacingAndGlyphs" font-size="9.6" fill="#b6b6b6" font-weight="normal" text-anchor="start">380</text><text x="1230" y="104" textLength="14.7" lengthAdjust="spacingAndGlyphs" font-size="9.6" fill="#b6b6b6" font-weight="normal" text-anchor="start">400</text><text x="1268" y="104" textLength="14.7" lengthAdjust="spacingAndGlyphs" font-size="9.6" fill="#b6b6b6" font-weight="normal" text-anchor="start">420</text><text x="1305" y="104" textLength="14.7" lengthAdjust="spacingAndGlyphs" font-size="9.6" fill="#b6b6b6" font-weight="normal" text-anchor="start">440</text><text x="1343" y="104" textLength="14.7" lengthAdjust="spacingAndGlyphs" font-size="9.6" fill="#b6b6b6" font-weight="normal" text-anchor="start">460</text><text x="1381" y="104" textLength="14.7" lengthAdjust="spacingAndGlyphs" font-size="9.6" fill="#b6b6b6" font-weight="normal" text-anchor="start">480</text><text x="1419" y="104" textLength="14.7" lengthAdjust="spacingAndGlyphs" font-size="9.6" fill="#b6b6b6" font-weight="normal" text-anchor="start">500</text><text x="1457" y="104" textLength="14.7" lengthAdjust="spacingAndGlyphs" font-size="9.6" fill="#b6b6b6" font-weight="normal" text-anchor="start">520</text><text x="1494" y="104" textLength="14.7" lengthAdjust="spacingAndGlyphs" font-size="9.6" fill="#b6b6b6" font-weight="normal" text-anchor="start">540</text><text x="1532" y="104" textLength="14.7" lengthAdjust="spacingAndGlyphs" font-size="9.6" fill="#b6b6b6" font-weight="normal" text-anchor="start">560</text><text x="44" y="141.5" textLength="4.9" lengthAdjust="spacingAndGlyphs" font-size="9.6" fill="#b6b6b6" font-weight="normal" text-anchor="start">6</text><text x="44" y="151.5" textLength="4.9" lengthAdjust="spacingAndGlyphs" font-size="9.6" fill="#b6b6b6" font-weight="normal" text-anchor="start">0</text><text x="44" y="178.5" textLength="4.9" lengthAdjust="spacingAndGlyphs" font-size="9.6" fill="#b6b6b6" font-weight="normal" text-anchor="start">4</text><text x="44" y="188.5" textLength="4.9" lengthAdjust="spacingAndGlyphs" font-size="9.6" fill="#b6b6b6" font-weight="normal" text-anchor="start">0</text><text x="44" y="216.5" textLength="4.9" lengthAdjust="spacingAndGlyphs" font-size="9.6" fill="#b6b6b6" font-weight="normal" text-anchor="start">2</text><text x="44" y="226.5" textLength="4.9" lengthAdjust="spacingAndGlyphs" font-size="9.6" fill="#b6b6b6" font-weight="normal" text-anchor="start">0</text><text x="44" y="254.5" textLength="4.9" lengthAdjust="spacingAndGlyphs" font-size="9.6" fill="#b6b6b6" font-weight="normal" text-anchor="start">0</text><text x="44" y="292.5" textLength="4.9" lengthAdjust="spacingAndGlyphs" font-size="9.6" fill="#b6b6b6" font-weight="normal" text-anchor="start">2</text><text x="44" y="302.5" textLength="4.9" lengthAdjust="spacingAndGlyphs" font-size="9.6" fill="#b6b6b6" font-weight="normal" text-anchor="start">0</text><text x="44" y="330.5" textLength="4.9" lengthAdjust="spacingAndGlyphs" font-size="9.6" fill="#b6b6b6" font-weight="normal" text-anchor="start">4</text><text x="44" y="340.5" textLength="4.9" lengthAdjust="spacingAndGlyphs" font-size="9.6" fill="#b6b6b6" font-weight="normal" text-anchor="start">0</text><text x="44" y="367.5" textLength="4.9" lengthAdjust="spacingAndGlyphs" font-size="9.6" fill="#b6b6b6" font-weight="normal" text-anchor="start">6</text><text x="44" y="377.5" textLength="4.9" lengthAdjust="spacingAndGlyphs" font-size="9.6" fill="#b6b6b6" font-weight="normal" text-anchor="start">0</text><text x="44" y="405.5" textLength="4.9" lengthAdjust="spacingAndGlyphs" font-size="9.6" fill="#b6b6b6" font-weight="normal" text-anchor="start">8</text><text x="44" y="415.5" textLength="4.9" lengthAdjust="spacingAndGlyphs" font-size="9.6" fill="#b6b6b6" font-weight="normal" text-anchor="start">0</text><text x="44" y="443.5" textLength="4.9" lengthAdjust="spacingAndGlyphs" font-size="9.6" fill="#b6b6b6" font-weight="normal" text-anchor="start">1</text><text x="44" y="453.5" textLength="4.9" lengthAdjust="spacingAndGlyphs" font-size="9.6" fill="#b6b6b6" font-weight="normal" text-anchor="start">0</text><text x="44" y="463.5" textLength="4.9" lengthAdjust="spacingAndGlyphs" font-size="9.6" fill="#b6b6b6" font-weight="normal" text-anchor="start">0</text><text x="44" y="481.5" textLength="4.9" lengthAdjust="spacingAndGlyphs" font-size="9.6" fill="#b6b6b6" font-weight="normal" text-anchor="start">1</text><text x="44" y="491.5" textLength="4.9" lengthAdjust="spacingAndGlyphs" font-size="9.6" fill="#b6b6b6" font-weight="normal" text-anchor="start">2</text><text x="44" y="501.5" textLength="4.9" lengthAdjust="spacingAndGlyphs" font-size="9.6" fill="#b6b6b6" font-weight="normal" text-anchor="start">0</text><text x="44" y="519.5" textLength="4.9" lengthAdjust="spacingAndGlyphs" font-size="9.6" fill="#b6b6b6" font-weight="normal" text-anchor="start">1</text><text x="44" y="529.5" textLength="4.9" lengthAdjust="spacingAndGlyphs" font-size="9.6" fill="#b6b6b6" font-weight="normal" text-anchor="start">4</text><text x="44" y="539.5" textLength="4.9" lengthAdjust="spacingAndGlyphs" font-size="9.6" fill="#b6b6b6" font-weight="normal" text-anchor="start">0</text><text x="44" y="556.5" textLength="4.9" lengthAdjust="spacingAndGlyphs" font-size="9.6" fill="#b6b6b6" font-weight="normal" text-anchor="start">1</text><text x="44" y="566.5" textLength="4.9" lengthAdjust="spacingAndGlyphs" font-size="9.6" fill="#b6b6b6" font-weight="normal" text-anchor="start">6</text><text x="44" y="576.5" textLength="4.9" lengthAdjust="spacingAndGlyphs" font-size="9.6" fill="#b6b6b6" font-weight="normal" text-anchor="start">0</text><text x="44" y="594.5" textLength="4.9" lengthAdjust="spacingAndGlyphs" font-size="9.6" fill="#b6b6b6" font-weight="normal" text-anchor="start">1</text><text x="44" y="604.5" textLength="4.9" lengthAdjust="spacingAndGlyphs" font-size="9.6" fill="#b6b6b6" font-weight="normal" text-anchor="start">8</text><text x="44" y="614.5" textLength="4.9" lengthAdjust="spacingAndGlyphs" font-size="9.6" fill="#b6b6b6" font-weight="normal" text-anchor="start">0</text><text x="44" y="632.5" textLength="4.9" lengthAdjust="spacingAndGlyphs" font-size="9.6" fill="#b6b6b6" font-weight="normal" text-anchor="start">2</text><text x="44" y="642.5" textLength="4.9" lengthAdjust="spacingAndGlyphs" font-size="9.6" fill="#b6b6b6" font-weight="normal" text-anchor="start">0</text><text x="44" y="652.5" textLength="4.9" lengthAdjust="spacingAndGlyphs" font-size="9.6" fill="#b6b6b6" font-weight="normal" text-anchor="start">0</text><text x="44" y="670.5" textLength="4.9" lengthAdjust="spacingAndGlyphs" font-size="9.6" fill="#b6b6b6" font-weight="normal" text-anchor="start">2</text><text x="44" y="680.5" textLength="4.9" lengthAdjust="spacingAndGlyphs" font-size="9.6" fill="#b6b6b6" font-weight="normal" text-anchor="start">2</text><text x="44" y="690.5" textLength="4.9" lengthAdjust="spacingAndGlyphs" font-size="9.6" fill="#b6b6b6" font-weight="normal" text-anchor="start">0</text><text x="44" y="708.5" textLength="4.9" lengthAdjust="spacingAndGlyphs" font-size="9.6" fill="#b6b6b6" font-weight="normal" text-anchor="start">2</text><text x="44" y="718.5" textLength="4.9" lengthAdjust="spacingAndGlyphs" font-size="9.6" fill="#b6b6b6" font-weight="normal" text-anchor="start">4</text><text x="44" y="728.5" textLength="4.9" lengthAdjust="spacingAndGlyphs" font-size="9.6" fill="#b6b6b6" font-weight="normal" text-anchor="start">0</text><text x="44" y="745.5" textLength="4.9" lengthAdjust="spacingAndGlyphs" font-size="9.6" fill="#b6b6b6" font-weight="normal" text-anchor="start">2</text><text x="44" y="755.5" textLength="4.9" lengthAdjust="spacingAndGlyphs" font-size="9.6" fill="#b6b6b6" font-weight="normal" text-anchor="start">6</text><text x="44" y="765.5" textLength="4.9" lengthAdjust="spacingAndGlyphs" font-size="9.6" fill="#b6b6b6" font-weight="normal" text-anchor="start">0</text><text x="44" y="783.5" textLength="4.9" lengthAdjust="spacingAndGlyphs" font-size="9.6" fill="#b6b6b6" font-weight="normal" text-anchor="start">2</text><text x="44" y="793.5" textLength="4.9" lengthAdjust="spacingAndGlyphs" font-size="9.6" fill="#b6b6b6" font-weight="normal" text-anchor="start">8</text><text x="44" y="803.5" textLength="4.9" lengthAdjust="spacingAndGlyphs" font-size="9.6" fill="#b6b6b6" font-weight="normal" text-anchor="start">0</text><text x="44" y="821.5" textLength="4.9" lengthAdjust="spacingAndGlyphs" font-size="9.6" fill="#b6b6b6" font-weight="normal" text-anchor="start">3</text><text x="44" y="831.5" textLength="4.9" lengthAdjust="spacingAndGlyphs" font-size="9.6" fill="#b6b6b6" font-weight="normal" text-anchor="start">0</text><text x="44" y="841.5" textLength="4.9" lengthAdjust="spacingAndGlyphs" font-size="9.6" fill="#b6b6b6" font-weight="normal" text-anchor="start">0</text><text x="44" y="859.5" textLength="4.9" lengthAdjust="spacingAndGlyphs" font-size="9.6" fill="#b6b6b6" font-weight="normal" text-anchor="start">3</text><text x="44" y="869.5" textLength="4.9" lengthAdjust="spacingAndGlyphs" font-size="9.6" fill="#b6b6b6" font-weight="normal" text-anchor="start">2</text><text x="44" y="879.5" textLength="4.9" lengthAdjust="spacingAndGlyphs" font-size="9.6" fill="#b6b6b6" font-weight="normal" text-anchor="start">0</text><text x="44" y="897.5" textLength="4.9" lengthAdjust="spacingAndGlyphs" font-size="9.6" fill="#b6b6b6" font-weight="normal" text-anchor="start">3</text><text x="44" y="907.5" textLength="4.9" lengthAdjust="spacingAndGlyphs" font-size="9.6" fill="#b6b6b6" font-weight="normal" text-anchor="start">4</text><text x="44" y="917.5" textLength="4.9" lengthAdjust="spacingAndGlyphs" font-size="9.6" fill="#b6b6b6" font-weight="normal" text-anchor="start">0</text><text x="44" y="934.5" textLength="4.9" lengthAdjust="spacingAndGlyphs" font-size="9.6" fill="#b6b6b6" font-weight="normal" text-anchor="start">3</text><text x="44" y="944.5" textLength="4.9" lengthAdjust="spacingAndGlyphs" font-size="9.6" fill="#b6b6b6" font-weight="normal" text-anchor="start">6</text><text x="44" y="954.5" textLength="4.9" lengthAdjust="spacingAndGlyphs" font-size="9.6" fill="#b6b6b6" font-weight="normal" text-anchor="start">0</text><text x="44" y="972.5" textLength="4.9" lengthAdjust="spacingAndGlyphs" font-size="9.6" fill="#b6b6b6" font-weight="normal" text-anchor="start">3</text><text x="44" y="982.5" textLength="4.9" lengthAdjust="spacingAndGlyphs" font-size="9.6" fill="#b6b6b6" font-weight="normal" text-anchor="start">8</text><text x="44" y="992.5" textLength="4.9" lengthAdjust="spacingAndGlyphs" font-size="9.6" fill="#b6b6b6" font-weight="normal" text-anchor="start">0</text><text x="44" y="1010.5" textLength="4.9" lengthAdjust="spacingAndGlyphs" font-size="9.6" fill="#b6b6b6" font-weight="normal" text-anchor="start">4</text><text x="44" y="1020.5" textLength="4.9" lengthAdjust="spacingAndGlyphs" font-size="9.6" fill="#b6b6b6" font-weight="normal" text-anchor="start">0</text><text x="44" y="1030.5" textLength="4.9" lengthAdjust="spacingAndGlyphs" font-size="9.6" fill="#b6b6b6" font-weight="normal" text-anchor="start">0</text><text x="44" y="1048.5" textLength="4.9" lengthAdjust="spacingAndGlyphs" font-size="9.6" fill="#b6b6b6" font-weight="normal" text-anchor="start">4</text><text x="44" y="1058.5" textLength="4.9" lengthAdjust="spacingAndGlyphs" font-size="9.6" fill="#b6b6b6" font-weight="normal" text-anchor="start">2</text><text x="44" y="1074" textLength="39" lengthAdjust="spacingAndGlyphs" font-size="12" fill="#e6e6e6" font-weight="normal" text-anchor="start">66.67%</text><text x="118" y="1074" textLength="111" lengthAdjust="spacingAndGlyphs" font-size="12" fill="#d0d0d0">ファイル : 3.00M/3.00M</text><text x="1633" y="91.5" textLength="52" lengthAdjust="spacingAndGlyphs" font-size="12" fill="#f0f0f0">ヒストグラム</text><text x="1704" y="91.5" textLength="24" lengthAdjust="spacingAndGlyphs" font-size="12" fill="#a6a6a6">情報</text><text x="1634" y="218.5" textLength="40.5" lengthAdjust="spacingAndGlyphs" font-size="12" fill="#a6a6a6">ライブラリ</text><text x="1694" y="218.5" textLength="46" lengthAdjust="spacingAndGlyphs" font-size="12" fill="#f0f0f0">色調補正</text><text x="1633.6" y="248" textLength="82" lengthAdjust="spacingAndGlyphs" font-size="12" fill="#d2d2d2">色調補正 を追加</text><text x="1634" y="362" textLength="36" lengthAdjust="spacingAndGlyphs" font-size="12" fill="#a6a6a6">レイヤー</text><text x="1689.6" y="362" textLength="45.4" lengthAdjust="spacingAndGlyphs" font-size="12" fill="#f0f0f0">チャンネル</text><text x="1687" y="398.4" textLength="21" lengthAdjust="spacingAndGlyphs" font-size="12" fill="#f0f0f0" font-weight="normal" text-anchor="start">RGB</text><text x="1860.8" y="397.6" textLength="27.8" lengthAdjust="spacingAndGlyphs" font-size="11" fill="#e8e8e8" font-weight="normal" text-anchor="start">Ctrl+2</text><text x="1687" y="435.4" textLength="25" lengthAdjust="spacingAndGlyphs" font-size="12" fill="#f0f0f0">レッド</text><text x="1860.8" y="434.6" textLength="27.8" lengthAdjust="spacingAndGlyphs" font-size="11" fill="#e8e8e8" font-weight="normal" text-anchor="start">Ctrl+3</text><text x="1687" y="472.4" textLength="34.7" lengthAdjust="spacingAndGlyphs" font-size="12" fill="#f0f0f0">グリーン</text><text x="1860.8" y="471.6" textLength="27.8" lengthAdjust="spacingAndGlyphs" font-size="11" fill="#e8e8e8" font-weight="normal" text-anchor="start">Ctrl+4</text><text x="1687" y="509.4" textLength="28.5" lengthAdjust="spacingAndGlyphs" font-size="12" fill="#f0f0f0">ブルー</text><text x="1860.8" y="508.6" textLength="27.8" lengthAdjust="spacingAndGlyphs" font-size="11" fill="#e8e8e8" font-weight="normal" text-anchor="start">Ctrl+5</text><text x="1095.5" y="309" textLength="56.2" lengthAdjust="spacingAndGlyphs" font-size="12" fill="#000">選択を解除</text><text x="1095.5" y="331" textLength="79.9" lengthAdjust="spacingAndGlyphs" font-size="12" fill="#000">選択範囲を反転</text><text x="1095.5" y="353" textLength="70.5" lengthAdjust="spacingAndGlyphs" font-size="12" fill="#000">境界をぼかす...</text><text x="1095.5" y="375" textLength="67.5" lengthAdjust="spacingAndGlyphs" font-size="12" fill="#000">選択とマスク...</text><text x="1095.5" y="404" textLength="89.1" lengthAdjust="spacingAndGlyphs" font-size="12" fill="#000">選択範囲を保存...</text><text x="1095.5" y="426" textLength="95.5" lengthAdjust="spacingAndGlyphs" font-size="12" fill="#000">作業用パスを作成...</text><text x="1095.5" y="455" textLength="133.3" lengthAdjust="spacingAndGlyphs" font-size="12" fill="#000">選択範囲をコピーしたレイヤー</text><text x="1095.5" y="477" textLength="134.1" lengthAdjust="spacingAndGlyphs" font-size="12" fill="#000">選択範囲をカットしたレイヤー</text><text x="1095.5" y="499" textLength="67.5" lengthAdjust="spacingAndGlyphs" font-size="12" fill="#000">新規レイヤー...</text><text x="1095.5" y="528" textLength="47.5" lengthAdjust="spacingAndGlyphs" font-size="12" fill="#000">自由変形</text><text x="1095.5" y="550" textLength="79.9" lengthAdjust="spacingAndGlyphs" font-size="12" fill="#000">選択範囲を変形</text><text x="1095.5" y="579" textLength="54.9" lengthAdjust="spacingAndGlyphs" font-size="12" fill="#000">塗りつぶし...</text><text x="1095.5" y="601" textLength="71.5" lengthAdjust="spacingAndGlyphs" font-size="12" fill="#000">境界線を描く...</text><text x="1095.5" y="630" textLength="86.2" lengthAdjust="spacingAndGlyphs" font-size="12" fill="#8c8c8c">フィルターの再実行</text><text x="1095.5" y="652" textLength="39.1" lengthAdjust="spacingAndGlyphs" font-size="12" fill="#8c8c8c">フェード...</text><text x="1095.5" y="681" textLength="114.5" lengthAdjust="spacingAndGlyphs" font-size="12" fill="#8c8c8c">3D レイヤーをレンダリング</text><text x="1095.5" y="703" textLength="84.1" lengthAdjust="spacingAndGlyphs" font-size="12" fill="#000">新規 3D 押し出し</text>
</svg>
</body></html>
